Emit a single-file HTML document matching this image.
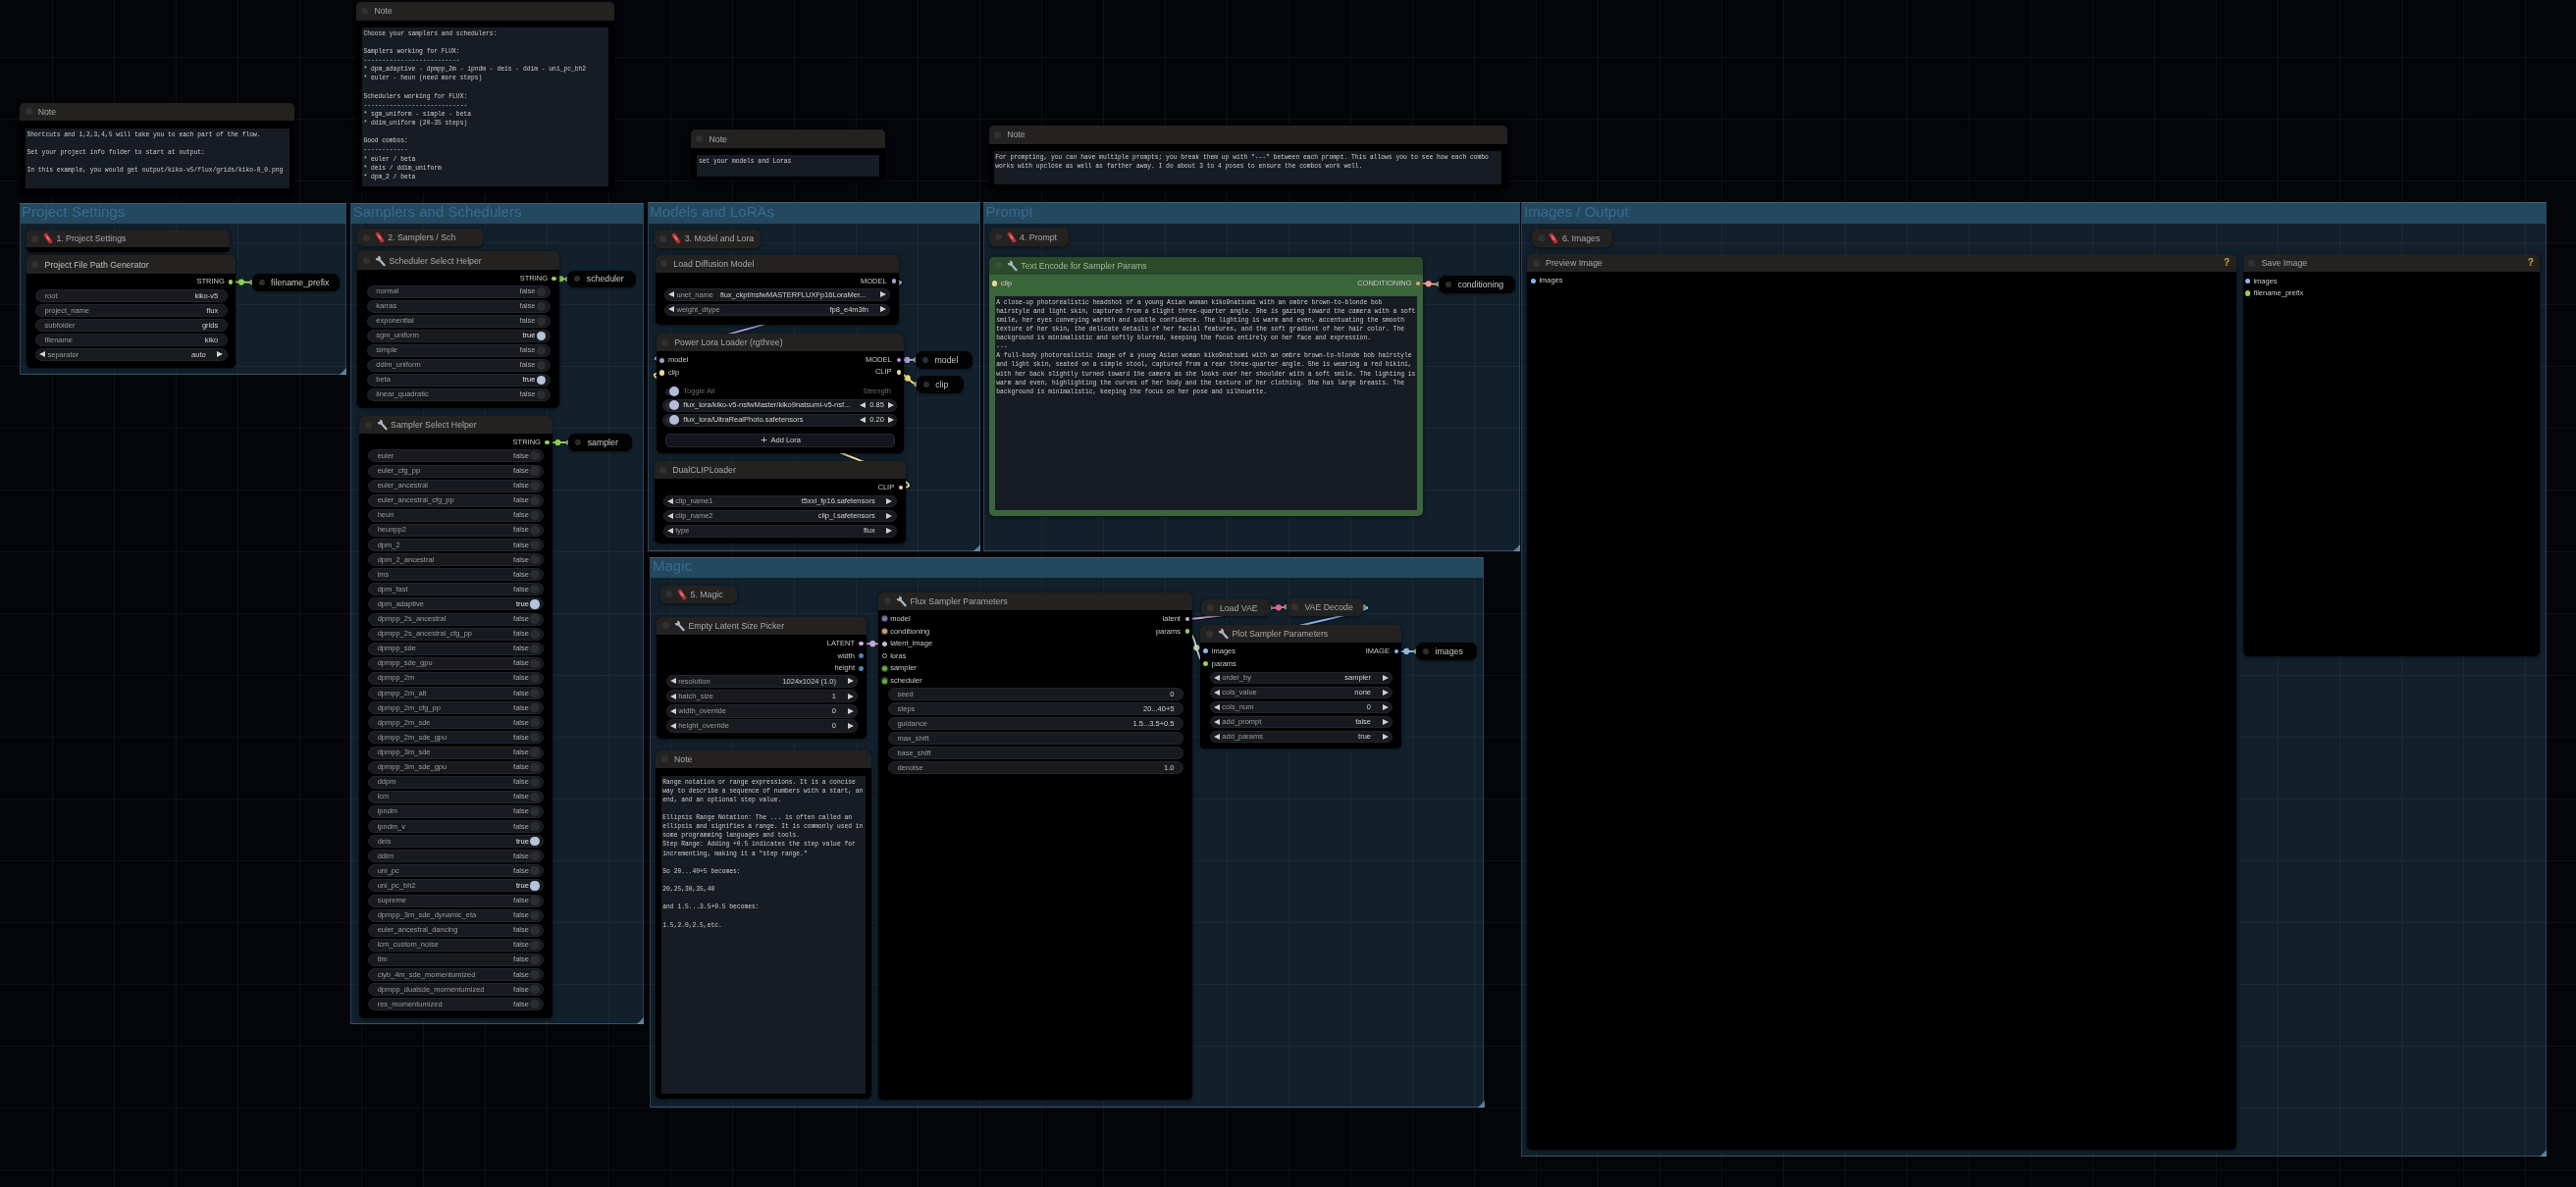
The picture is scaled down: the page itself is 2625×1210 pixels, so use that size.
<!DOCTYPE html>
<html><head><meta charset="utf-8"><style>
html,body{margin:0;padding:0;}
body{width:2625px;height:1210px;overflow:hidden;position:relative;background-color:#040509;
background-image:linear-gradient(90deg, rgba(255,255,255,0.045) 1px, transparent 1px),linear-gradient(180deg, rgba(255,255,255,0.045) 1px, transparent 1px);
background-size:63px 63px;background-position:53px 58px;font-family:"Liberation Sans", sans-serif;}
div,svg{position:absolute;box-sizing:border-box;}
.t{white-space:pre;}
.c{border-radius:50%;}
.g{background:rgba(63,120,158,0.24);border-left:1px solid rgba(80,130,170,0.35);border-right:1px solid rgba(80,130,170,0.35);border-bottom:1px solid rgba(110,150,185,0.4);}
.gt{background:#24485e;border-top:1px solid rgba(80,120,145,0.6);}
.gc{width:0;height:0;border-left:7px solid transparent;border-bottom:7px solid rgba(120,165,200,0.7);}
.n{box-shadow:0 1px 4px rgba(0,0,0,0.55);}
.rr{background:#030303;border-radius:7px;box-shadow:0 1px 3px rgba(0,0,0,0.5);}
.w{background:#181a1f;border:1px solid #22252b;}
.al{width:0;height:0;border-top:3.3px solid transparent;border-bottom:3.3px solid transparent;border-right:6px solid #d0d0d0;}
.ar{width:0;height:0;border-top:3.3px solid transparent;border-bottom:3.3px solid transparent;border-left:6px solid #d0d0d0;}
.ta{background:#171b23;}
.tat{white-space:pre;font-family:"Liberation Mono", monospace;font-size:6.3px;color:#cdcdcd;}
.ic{overflow:visible;}
</style></head><body><div id="wrap" style="left:0;top:0;width:2625px;height:1210px;will-change:transform;">

<div class="n" style="left:20px;top:104.5px;width:280.4px;height:94px;background:#000000;border-radius:5px;"></div>
<div class="nt" style="left:20px;top:104.5px;width:280.4px;height:18.4px;background:#232221;border-radius:5px 5px 0 0;"></div>
<div class="c" style="left:25.5px;top:110.2px;width:7px;height:7px;background:rgba(140,140,150,0.14);"></div>
<div class="t" style="left:38.7px;top:106.7px;height:14px;line-height:14px;font-size:8.75px;color:#a8a8a8;font-family:'Liberation Sans', sans-serif;">Note</div>
<div class="ta" style="left:26.3px;top:131px;width:268.4px;height:61px;"></div>
<div class="tat" style="left:27.5px;top:132.63px;line-height:9.13px;">Shortcuts and 1,2,3,4,5 will take you to each part of the flow.

Set your project info folder to start at output:

In this example, you would get output/kiko-v5/flux/grids/kiko-0_0.png</div>
<div class="n" style="left:362.7px;top:2.2px;width:263.7px;height:192.8px;background:#000000;border-radius:5px;"></div>
<div class="nt" style="left:362.7px;top:2.2px;width:263.7px;height:18.5px;background:#232221;border-radius:5px 5px 0 0;"></div>
<div class="c" style="left:368.2px;top:7.95px;width:7px;height:7px;background:rgba(140,140,150,0.14);"></div>
<div class="t" style="left:381.4px;top:4.45px;height:14px;line-height:14px;font-size:8.75px;color:#a8a8a8;font-family:'Liberation Sans', sans-serif;">Note</div>
<div class="ta" style="left:369px;top:27.8px;width:250.6px;height:162.6px;"></div>
<div class="tat" style="left:370.4px;top:29.84px;line-height:9.13px;">Choose your samplers and schedulers:

Samplers working for FLUX:
--------------------------
* dpm_adaptive - dpmpp_2m - ipndm - deis - ddim - uni_pc_bh2
* euler - heun (need more steps)

Schedulers working for FLUX:
----------------------------
* sgm_uniform - simple - beta
* ddim_uniform (20-35 steps)

Good combos:
------------
* euler / beta
* deis / ddim_uniform
* dpm_2 / beta</div>
<div class="n" style="left:703.8px;top:132.4px;width:198.7px;height:52.1px;background:#000000;border-radius:5px;"></div>
<div class="nt" style="left:703.8px;top:132.4px;width:198.7px;height:18.5px;background:#232221;border-radius:5px 5px 0 0;"></div>
<div class="c" style="left:709.3px;top:138.15px;width:7px;height:7px;background:rgba(140,140,150,0.14);"></div>
<div class="t" style="left:722.5px;top:134.65px;height:14px;line-height:14px;font-size:8.75px;color:#a8a8a8;font-family:'Liberation Sans', sans-serif;">Note</div>
<div class="ta" style="left:710.4px;top:158.2px;width:185.4px;height:21.6px;"></div>
<div class="tat" style="left:711.9px;top:159.94px;line-height:9.13px;">set your models and Loras</div>
<div class="n" style="left:1007.5px;top:128.1px;width:528.4px;height:64.5px;background:#000000;border-radius:5px;"></div>
<div class="nt" style="left:1007.5px;top:128.1px;width:528.4px;height:18.6px;background:#232221;border-radius:5px 5px 0 0;"></div>
<div class="c" style="left:1013px;top:133.9px;width:7px;height:7px;background:rgba(140,140,150,0.14);"></div>
<div class="t" style="left:1026.2px;top:130.4px;height:14px;line-height:14px;font-size:8.75px;color:#a8a8a8;font-family:'Liberation Sans', sans-serif;">Note</div>
<div class="ta" style="left:1013.2px;top:153.7px;width:516.7px;height:34.2px;"></div>
<div class="tat" style="left:1014.3px;top:155.63px;line-height:9.13px;">For prompting, you can have multiple prompts; you break them up with &quot;---&quot; between each prompt. This allows you to see how each combo
works with upclose as well as farther away. I do about 3 to 4 poses to ensure the combos work well.</div>
<div class="g" style="left:19.5px;top:206.6px;width:333.8px;height:175.8px;"></div>
<div class="gt" style="left:19.5px;top:206.6px;width:333.8px;height:21.4px;"></div>
<div class="t" style="left:22.1px;top:204.1px;height:24px;line-height:24px;font-size:15px;color:#386b92;font-family:'Liberation Sans', sans-serif;">Project Settings</div>
<div class="gc" style="left:346.3px;top:375.4px;"></div>
<div class="g" style="left:357.1px;top:206.6px;width:298.8px;height:837.7px;"></div>
<div class="gt" style="left:357.1px;top:206.6px;width:298.8px;height:21.4px;"></div>
<div class="t" style="left:359.7px;top:204.1px;height:24px;line-height:24px;font-size:15px;color:#386b92;font-family:'Liberation Sans', sans-serif;">Samplers and Schedulers</div>
<div class="gc" style="left:648.9px;top:1037.3px;"></div>
<div class="g" style="left:659.7px;top:206.4px;width:339.1px;height:355.6px;"></div>
<div class="gt" style="left:659.7px;top:206.4px;width:339.1px;height:21.4px;"></div>
<div class="t" style="left:662.3px;top:203.9px;height:24px;line-height:24px;font-size:15px;color:#386b92;font-family:'Liberation Sans', sans-serif;">Models and LoRAs</div>
<div class="gc" style="left:991.8px;top:555px;"></div>
<div class="g" style="left:1001.8px;top:206.4px;width:547.5px;height:355.9px;"></div>
<div class="gt" style="left:1001.8px;top:206.4px;width:547.5px;height:21.4px;"></div>
<div class="t" style="left:1004.4px;top:203.9px;height:24px;line-height:24px;font-size:15px;color:#386b92;font-family:'Liberation Sans', sans-serif;">Prompt</div>
<div class="gc" style="left:1542.3px;top:555.3px;"></div>
<div class="g" style="left:1550.4px;top:206.2px;width:1044.8px;height:972.6px;"></div>
<div class="gt" style="left:1550.4px;top:206.2px;width:1044.8px;height:21.4px;"></div>
<div class="t" style="left:1553px;top:203.7px;height:24px;line-height:24px;font-size:15px;color:#386b92;font-family:'Liberation Sans', sans-serif;">Images / Output</div>
<div class="gc" style="left:2588.2px;top:1171.8px;"></div>
<div class="g" style="left:662.4px;top:567.9px;width:850.1px;height:561.1px;"></div>
<div class="gt" style="left:662.4px;top:567.9px;width:850.1px;height:21.4px;"></div>
<div class="t" style="left:665px;top:565.4px;height:24px;line-height:24px;font-size:15px;color:#386b92;font-family:'Liberation Sans', sans-serif;">Magic</div>
<div class="gc" style="left:1505.5px;top:1122px;"></div>
<svg style="left:0;top:0" width="2625" height="1210" viewBox="0 0 2625 1210">
<path d="M235.2 287.3 C240.55 287.3 251.25 287.8 256.6 287.8" fill="none" stroke="rgba(0,0,0,0.5)" stroke-width="4.4"/>
<path d="M235.2 287.3 C240.55 287.3 251.25 287.8 256.6 287.8" fill="none" stroke="#8fd050" stroke-width="2"/>
<circle cx="245.9" cy="287.55" r="3.1" fill="#8fd050"/>
<circle cx="256.6" cy="287.8" r="2.6" fill="#88a888"/>
<path d="M564.4 284 C567.88 284 574.82 284.5 578.3 284.5" fill="none" stroke="rgba(0,0,0,0.5)" stroke-width="4.4"/>
<path d="M564.4 284 C567.88 284 574.82 284.5 578.3 284.5" fill="none" stroke="#8fd050" stroke-width="2"/>
<circle cx="571.35" cy="284.25" r="3.1" fill="#8fd050"/>
<circle cx="578.3" cy="284.5" r="2.6" fill="#88a888"/>
<path d="M557.6 451 C563 451 573.8 451 579.2 451" fill="none" stroke="rgba(0,0,0,0.5)" stroke-width="4.4"/>
<path d="M557.6 451 C563 451 573.8 451 579.2 451" fill="none" stroke="#8fd050" stroke-width="2"/>
<circle cx="568.4" cy="451" r="3.1" fill="#8fd050"/>
<circle cx="579.2" cy="451" r="2.6" fill="#88a888"/>
<path d="M910.8 286.5 C973.13 286.5 612.57 367.2 674.9 367.2" fill="none" stroke="rgba(0,0,0,0.5)" stroke-width="4.4"/>
<path d="M910.8 286.5 C973.13 286.5 612.57 367.2 674.9 367.2" fill="none" stroke="#a8a0d8" stroke-width="2"/>
<path d="M917.9 497.1 C985.34 497.1 607.46 380 674.9 380" fill="none" stroke="rgba(0,0,0,0.5)" stroke-width="4.4"/>
<path d="M917.9 497.1 C985.34 497.1 607.46 380 674.9 380" fill="none" stroke="#f0e0a0" stroke-width="2"/>
<path d="M915.8 367 C920.1 367 928.7 366.8 933 366.8" fill="none" stroke="rgba(0,0,0,0.5)" stroke-width="4.4"/>
<path d="M915.8 367 C920.1 367 928.7 366.8 933 366.8" fill="none" stroke="#a8a0d8" stroke-width="2"/>
<circle cx="924.4" cy="366.9" r="3.1" fill="#a8a0d8"/>
<circle cx="933" cy="366.8" r="2.6" fill="#88a888"/>
<path d="M915.8 379.4 C921.2 379.4 928.3 391.5 933.7 391.5" fill="none" stroke="rgba(0,0,0,0.5)" stroke-width="4.4"/>
<path d="M915.8 379.4 C921.2 379.4 928.3 391.5 933.7 391.5" fill="none" stroke="#f0d878" stroke-width="2"/>
<circle cx="924.75" cy="385.45" r="3.1" fill="#f0d878"/>
<circle cx="933.7" cy="391.5" r="2.6" fill="#88a888"/>
<path d="M1445.2 288.8 C1450.4 288.8 1460.8 289.7 1466 289.7" fill="none" stroke="rgba(0,0,0,0.5)" stroke-width="4.4"/>
<path d="M1445.2 288.8 C1450.4 288.8 1460.8 289.7 1466 289.7" fill="none" stroke="#f0a090" stroke-width="2"/>
<circle cx="1455.6" cy="289.25" r="3.1" fill="#f0a090"/>
<circle cx="1466" cy="289.7" r="2.6" fill="#88a888"/>
<path d="M877.4 656 C883.35 656 895.25 656.3 901.2 656.3" fill="none" stroke="rgba(0,0,0,0.5)" stroke-width="4.4"/>
<path d="M877.4 656 C883.35 656 895.25 656.3 901.2 656.3" fill="none" stroke="#c8a8d8" stroke-width="2"/>
<circle cx="889.3" cy="656.15" r="3.1" fill="#c8a8d8"/>
<path d="M1209.8 630.9 C1235.21 630.9 1285.29 618.7 1310.7 618.7" fill="none" stroke="rgba(0,0,0,0.5)" stroke-width="4.4"/>
<path d="M1209.8 630.9 C1235.21 630.9 1285.29 618.7 1310.7 618.7" fill="none" stroke="#c0a8d8" stroke-width="2"/>
<path d="M1295.1 619.9 C1299.01 619.9 1306.79 618.7 1310.7 618.7" fill="none" stroke="rgba(0,0,0,0.5)" stroke-width="4.4"/>
<path d="M1295.1 619.9 C1299.01 619.9 1306.79 618.7 1310.7 618.7" fill="none" stroke="#e06488" stroke-width="2"/>
<circle cx="1302.9" cy="619.3" r="3.1" fill="#e06488"/>
<circle cx="1310.7" cy="618.7" r="2.6" fill="#88a888"/>
<path d="M1388.6 618.7 C1430.12 618.7 1187.28 663.9 1228.8 663.9" fill="none" stroke="rgba(0,0,0,0.5)" stroke-width="4.4"/>
<path d="M1388.6 618.7 C1430.12 618.7 1187.28 663.9 1228.8 663.9" fill="none" stroke="#88b8e8" stroke-width="2"/>
<path d="M1209.8 643.7 C1219.34 643.7 1219.26 676.8 1228.8 676.8" fill="none" stroke="rgba(0,0,0,0.5)" stroke-width="4.4"/>
<path d="M1209.8 643.7 C1219.34 643.7 1219.26 676.8 1228.8 676.8" fill="none" stroke="#c8dcc0" stroke-width="2"/>
<circle cx="1219.3" cy="660.25" r="3.1" fill="#c8dcc0"/>
<path d="M1423.2 663.9 C1428.18 663.9 1438.12 664 1443.1 664" fill="none" stroke="rgba(0,0,0,0.5)" stroke-width="4.4"/>
<path d="M1423.2 663.9 C1428.18 663.9 1438.12 664 1443.1 664" fill="none" stroke="#88b8e8" stroke-width="2"/>
<circle cx="1433.15" cy="663.95" r="3.1" fill="#88b8e8"/>
<circle cx="1443.1" cy="664" r="2.6" fill="#88a888"/>
<circle cx="1294.3" cy="619.6" r="2.6" fill="#80a080"/>
<circle cx="1389.5" cy="618.7" r="2.6" fill="#80a080"/>
</svg>
<div class="n" style="left:26.5px;top:234.3px;width:207.9px;height:23.2px;background:#000000;border-radius:5px;"></div>
<div class="nt" style="left:26.5px;top:234.3px;width:207.9px;height:18.2px;background:#232221;border-radius:5px 5px 0 0;"></div>
<div class="c" style="left:32px;top:239.9px;width:7px;height:7px;background:rgba(140,140,150,0.14);"></div>
<svg class="ic" style="left:40.9px;top:235.4px" width="16" height="16" viewBox="-8 -8 16 16"><g transform="rotate(55)"><rect x="-5.8" y="-2" width="11.6" height="4" rx="1.5" fill="#b83034"/><rect x="-3.2" y="-1" width="5.5" height="2" rx="1" fill="#f07878" opacity="0.85"/></g></svg>
<div class="t" style="left:57.4px;top:236.4px;height:14px;line-height:14px;font-size:8.75px;color:#a8a8a8;font-family:'Liberation Sans', sans-serif;">1. Project Settings</div>
<div class="n" style="left:26.9px;top:260.3px;width:213.3px;height:114.8px;background:#000000;border-radius:5px;"></div>
<div class="nt" style="left:26.9px;top:260.3px;width:213.3px;height:18.5px;background:#232221;border-radius:5px 5px 0 0;"></div>
<div class="c" style="left:32.4px;top:266.05px;width:7px;height:7px;background:rgba(140,140,150,0.14);"></div>
<div class="t" style="left:45.6px;top:262.55px;height:14px;line-height:14px;font-size:8.75px;color:#c0c0c0;font-family:'Liberation Sans', sans-serif;">Project File Path Generator</div>
<div class="c" style="left:232.9px;top:285px;width:4.6px;height:4.6px;background:#9ccc58;"></div>
<div class="t" style="right:2396.2px;top:281.3px;height:12px;line-height:12px;font-size:7.5px;color:#c8c8c8;font-family:'Liberation Sans', sans-serif;text-align:right;">STRING</div>
<div class="w" style="left:35.9px;top:295.3px;width:195.8px;height:12.5px;border-radius:6.25px;"></div>
<div class="t" style="left:45.6px;top:295.55px;height:12px;line-height:12px;font-size:7.5px;color:#9a9a9a;font-family:'Liberation Sans', sans-serif;">root</div>
<div class="t" style="right:2402.8px;top:295.55px;height:12px;line-height:12px;font-size:7.5px;color:#d0d0d0;font-family:'Liberation Sans', sans-serif;text-align:right;">kiko-v5</div>
<div class="w" style="left:35.9px;top:310.3px;width:195.8px;height:12.5px;border-radius:6.25px;"></div>
<div class="t" style="left:45.6px;top:310.55px;height:12px;line-height:12px;font-size:7.5px;color:#9a9a9a;font-family:'Liberation Sans', sans-serif;">project_name</div>
<div class="t" style="right:2402.8px;top:310.55px;height:12px;line-height:12px;font-size:7.5px;color:#d0d0d0;font-family:'Liberation Sans', sans-serif;text-align:right;">flux</div>
<div class="w" style="left:35.9px;top:325.3px;width:195.8px;height:12.5px;border-radius:6.25px;"></div>
<div class="t" style="left:45.6px;top:325.55px;height:12px;line-height:12px;font-size:7.5px;color:#9a9a9a;font-family:'Liberation Sans', sans-serif;">subfolder</div>
<div class="t" style="right:2402.8px;top:325.55px;height:12px;line-height:12px;font-size:7.5px;color:#d0d0d0;font-family:'Liberation Sans', sans-serif;text-align:right;">grids</div>
<div class="w" style="left:35.9px;top:340.3px;width:195.8px;height:12.5px;border-radius:6.25px;"></div>
<div class="t" style="left:45.6px;top:340.55px;height:12px;line-height:12px;font-size:7.5px;color:#9a9a9a;font-family:'Liberation Sans', sans-serif;">filename</div>
<div class="t" style="right:2402.8px;top:340.55px;height:12px;line-height:12px;font-size:7.5px;color:#d0d0d0;font-family:'Liberation Sans', sans-serif;text-align:right;">kiko</div>
<div class="w" style="left:35.9px;top:355.3px;width:195.8px;height:12.8px;border-radius:6.4px;"></div>
<div class="al" style="left:40.2px;top:358.4px"></div>
<div class="ar" style="left:221.4px;top:358.4px"></div>
<div class="t" style="left:48.5px;top:355.7px;height:12px;line-height:12px;font-size:7.5px;color:#9a9a9a;font-family:'Liberation Sans', sans-serif;">separator</div>
<div class="t" style="right:2415.3px;top:355.7px;height:12px;line-height:12px;font-size:7.5px;color:#d0d0d0;font-family:'Liberation Sans', sans-serif;text-align:right;">auto</div>
<div class="rr" style="left:256.6px;top:278.8px;width:89.7px;height:18.4px;"></div>
<div class="c" style="left:263.6px;top:285px;width:6px;height:6px;background:#2c2e33;"></div>
<div class="t" style="left:276.1px;top:281px;height:14px;line-height:14px;font-size:8.75px;color:#c8c8c8;font-family:'Liberation Sans', sans-serif;">filename_prefix</div>
<div class="n cl" style="left:364.3px;top:233.1px;width:128.9px;height:18.1px;background:#232221;border-radius:6px;"></div>
<div class="c" style="left:369.8px;top:238.65px;width:7px;height:7px;background:rgba(140,140,150,0.14);"></div>
<svg class="ic" style="left:378.7px;top:234.15px" width="16" height="16" viewBox="-8 -8 16 16"><g transform="rotate(55)"><rect x="-5.8" y="-2" width="11.6" height="4" rx="1.5" fill="#b83034"/><rect x="-3.2" y="-1" width="5.5" height="2" rx="1" fill="#f07878" opacity="0.85"/></g></svg>
<div class="t" style="left:395.2px;top:235.15px;height:14px;line-height:14px;font-size:8.75px;color:#a8a8a8;font-family:'Liberation Sans', sans-serif;">2. Samplers / Sch</div>
<div class="n" style="left:364.3px;top:256.2px;width:205.6px;height:160.1px;background:#000000;border-radius:5px;"></div>
<div class="nt" style="left:364.3px;top:256.2px;width:205.6px;height:18.6px;background:#232221;border-radius:5px 5px 0 0;"></div>
<div class="c" style="left:369.8px;top:262px;width:7px;height:7px;background:rgba(140,140,150,0.14);"></div>
<svg class="ic" style="left:380.2px;top:257.5px" width="16" height="16" viewBox="-8 -8 16 16"><line x1="-2" y1="-2" x2="3.6" y2="4.2" stroke="#a9bac8" stroke-width="2.2" stroke-linecap="round"/><circle cx="-2.6" cy="-2.8" r="2.5" fill="#a9bac8"/><circle cx="-3.9" cy="-4.1" r="1.3" fill="#232221"/></svg>
<div class="t" style="left:396.4px;top:258.5px;height:14px;line-height:14px;font-size:8.75px;color:#a8a8a8;font-family:'Liberation Sans', sans-serif;">Scheduler Select Helper</div>
<div class="c" style="left:562.1px;top:281.7px;width:4.6px;height:4.6px;background:#9ccc58;"></div>
<div class="t" style="right:2066.9px;top:278px;height:12px;line-height:12px;font-size:7.5px;color:#c8c8c8;font-family:'Liberation Sans', sans-serif;text-align:right;">STRING</div>
<div class="w" style="left:373.6px;top:290.8px;width:187.1px;height:13px;border-radius:6.5px;"></div>
<div class="t" style="left:383.3px;top:291.3px;height:12px;line-height:12px;font-size:7.5px;color:#9a9a9a;font-family:'Liberation Sans', sans-serif;">normal</div>
<div class="c" style="left:546.9px;top:292.7px;width:9.2px;height:9.2px;background:#2a2c30;"></div>
<div class="t" style="right:2079.6px;top:291.3px;height:12px;line-height:12px;font-size:7.5px;color:#a8a8a8;font-family:'Liberation Sans', sans-serif;text-align:right;">false</div>
<div class="w" style="left:373.6px;top:305.8px;width:187.1px;height:13px;border-radius:6.5px;"></div>
<div class="t" style="left:383.3px;top:306.3px;height:12px;line-height:12px;font-size:7.5px;color:#9a9a9a;font-family:'Liberation Sans', sans-serif;">karras</div>
<div class="c" style="left:546.9px;top:307.7px;width:9.2px;height:9.2px;background:#2a2c30;"></div>
<div class="t" style="right:2079.6px;top:306.3px;height:12px;line-height:12px;font-size:7.5px;color:#a8a8a8;font-family:'Liberation Sans', sans-serif;text-align:right;">false</div>
<div class="w" style="left:373.6px;top:320.8px;width:187.1px;height:13px;border-radius:6.5px;"></div>
<div class="t" style="left:383.3px;top:321.3px;height:12px;line-height:12px;font-size:7.5px;color:#9a9a9a;font-family:'Liberation Sans', sans-serif;">exponential</div>
<div class="c" style="left:546.9px;top:322.7px;width:9.2px;height:9.2px;background:#2a2c30;"></div>
<div class="t" style="right:2079.6px;top:321.3px;height:12px;line-height:12px;font-size:7.5px;color:#a8a8a8;font-family:'Liberation Sans', sans-serif;text-align:right;">false</div>
<div class="w" style="left:373.6px;top:335.8px;width:187.1px;height:13px;border-radius:6.5px;"></div>
<div class="t" style="left:383.3px;top:336.3px;height:12px;line-height:12px;font-size:7.5px;color:#9a9a9a;font-family:'Liberation Sans', sans-serif;">sgm_uniform</div>
<div class="c" style="left:546.9px;top:337.7px;width:9.2px;height:9.2px;background:#b4c4da;"></div>
<div class="t" style="right:2079.6px;top:336.3px;height:12px;line-height:12px;font-size:7.5px;color:#e0e0e0;font-family:'Liberation Sans', sans-serif;text-align:right;">true</div>
<div class="w" style="left:373.6px;top:350.8px;width:187.1px;height:13px;border-radius:6.5px;"></div>
<div class="t" style="left:383.3px;top:351.3px;height:12px;line-height:12px;font-size:7.5px;color:#9a9a9a;font-family:'Liberation Sans', sans-serif;">simple</div>
<div class="c" style="left:546.9px;top:352.7px;width:9.2px;height:9.2px;background:#2a2c30;"></div>
<div class="t" style="right:2079.6px;top:351.3px;height:12px;line-height:12px;font-size:7.5px;color:#a8a8a8;font-family:'Liberation Sans', sans-serif;text-align:right;">false</div>
<div class="w" style="left:373.6px;top:365.8px;width:187.1px;height:13px;border-radius:6.5px;"></div>
<div class="t" style="left:383.3px;top:366.3px;height:12px;line-height:12px;font-size:7.5px;color:#9a9a9a;font-family:'Liberation Sans', sans-serif;">ddim_uniform</div>
<div class="c" style="left:546.9px;top:367.7px;width:9.2px;height:9.2px;background:#2a2c30;"></div>
<div class="t" style="right:2079.6px;top:366.3px;height:12px;line-height:12px;font-size:7.5px;color:#a8a8a8;font-family:'Liberation Sans', sans-serif;text-align:right;">false</div>
<div class="w" style="left:373.6px;top:380.8px;width:187.1px;height:13px;border-radius:6.5px;"></div>
<div class="t" style="left:383.3px;top:381.3px;height:12px;line-height:12px;font-size:7.5px;color:#9a9a9a;font-family:'Liberation Sans', sans-serif;">beta</div>
<div class="c" style="left:546.9px;top:382.7px;width:9.2px;height:9.2px;background:#b4c4da;"></div>
<div class="t" style="right:2079.6px;top:381.3px;height:12px;line-height:12px;font-size:7.5px;color:#e0e0e0;font-family:'Liberation Sans', sans-serif;text-align:right;">true</div>
<div class="w" style="left:373.6px;top:395.8px;width:187.1px;height:13px;border-radius:6.5px;"></div>
<div class="t" style="left:383.3px;top:396.3px;height:12px;line-height:12px;font-size:7.5px;color:#9a9a9a;font-family:'Liberation Sans', sans-serif;">linear_quadratic</div>
<div class="c" style="left:546.9px;top:397.7px;width:9.2px;height:9.2px;background:#2a2c30;"></div>
<div class="t" style="right:2079.6px;top:396.3px;height:12px;line-height:12px;font-size:7.5px;color:#a8a8a8;font-family:'Liberation Sans', sans-serif;text-align:right;">false</div>
<div class="rr" style="left:578.3px;top:275.6px;width:70px;height:17.7px;"></div>
<div class="c" style="left:585.3px;top:281.45px;width:6px;height:6px;background:#2c2e33;"></div>
<div class="t" style="left:597.8px;top:277.45px;height:14px;line-height:14px;font-size:8.75px;color:#c8c8c8;font-family:'Liberation Sans', sans-serif;">scheduler</div>
<div class="n" style="left:366px;top:424.3px;width:197.2px;height:613.3px;background:#000000;border-radius:5px;"></div>
<div class="nt" style="left:366px;top:424.3px;width:197.2px;height:18.1px;background:#232221;border-radius:5px 5px 0 0;"></div>
<div class="c" style="left:371.5px;top:429.85px;width:7px;height:7px;background:rgba(140,140,150,0.14);"></div>
<svg class="ic" style="left:381.9px;top:425.35px" width="16" height="16" viewBox="-8 -8 16 16"><line x1="-2" y1="-2" x2="3.6" y2="4.2" stroke="#a9bac8" stroke-width="2.2" stroke-linecap="round"/><circle cx="-2.6" cy="-2.8" r="2.5" fill="#a9bac8"/><circle cx="-3.9" cy="-4.1" r="1.3" fill="#232221"/></svg>
<div class="t" style="left:398.1px;top:426.35px;height:14px;line-height:14px;font-size:8.75px;color:#a8a8a8;font-family:'Liberation Sans', sans-serif;">Sampler Select Helper</div>
<div class="c" style="left:555.3px;top:448.7px;width:4.6px;height:4.6px;background:#9ccc58;"></div>
<div class="t" style="right:2074.1px;top:445px;height:12px;line-height:12px;font-size:7.5px;color:#c8c8c8;font-family:'Liberation Sans', sans-serif;text-align:right;">STRING</div>
<div class="w" style="left:375px;top:458.4px;width:179.2px;height:13px;border-radius:6.5px;"></div>
<div class="t" style="left:384.7px;top:458.9px;height:12px;line-height:12px;font-size:7.5px;color:#9a9a9a;font-family:'Liberation Sans', sans-serif;">euler</div>
<div class="c" style="left:540.4px;top:460.3px;width:9.2px;height:9.2px;background:#2a2c30;"></div>
<div class="t" style="right:2086.1px;top:458.9px;height:12px;line-height:12px;font-size:7.5px;color:#a8a8a8;font-family:'Liberation Sans', sans-serif;text-align:right;">false</div>
<div class="w" style="left:375px;top:473.5px;width:179.2px;height:13px;border-radius:6.5px;"></div>
<div class="t" style="left:384.7px;top:474px;height:12px;line-height:12px;font-size:7.5px;color:#9a9a9a;font-family:'Liberation Sans', sans-serif;">euler_cfg_pp</div>
<div class="c" style="left:540.4px;top:475.4px;width:9.2px;height:9.2px;background:#2a2c30;"></div>
<div class="t" style="right:2086.1px;top:474px;height:12px;line-height:12px;font-size:7.5px;color:#a8a8a8;font-family:'Liberation Sans', sans-serif;text-align:right;">false</div>
<div class="w" style="left:375px;top:488.61px;width:179.2px;height:13px;border-radius:6.5px;"></div>
<div class="t" style="left:384.7px;top:489.11px;height:12px;line-height:12px;font-size:7.5px;color:#9a9a9a;font-family:'Liberation Sans', sans-serif;">euler_ancestral</div>
<div class="c" style="left:540.4px;top:490.51px;width:9.2px;height:9.2px;background:#2a2c30;"></div>
<div class="t" style="right:2086.1px;top:489.11px;height:12px;line-height:12px;font-size:7.5px;color:#a8a8a8;font-family:'Liberation Sans', sans-serif;text-align:right;">false</div>
<div class="w" style="left:375px;top:503.71px;width:179.2px;height:13px;border-radius:6.5px;"></div>
<div class="t" style="left:384.7px;top:504.21px;height:12px;line-height:12px;font-size:7.5px;color:#9a9a9a;font-family:'Liberation Sans', sans-serif;">euler_ancestral_cfg_pp</div>
<div class="c" style="left:540.4px;top:505.61px;width:9.2px;height:9.2px;background:#2a2c30;"></div>
<div class="t" style="right:2086.1px;top:504.21px;height:12px;line-height:12px;font-size:7.5px;color:#a8a8a8;font-family:'Liberation Sans', sans-serif;text-align:right;">false</div>
<div class="w" style="left:375px;top:518.82px;width:179.2px;height:13px;border-radius:6.5px;"></div>
<div class="t" style="left:384.7px;top:519.32px;height:12px;line-height:12px;font-size:7.5px;color:#9a9a9a;font-family:'Liberation Sans', sans-serif;">heun</div>
<div class="c" style="left:540.4px;top:520.72px;width:9.2px;height:9.2px;background:#2a2c30;"></div>
<div class="t" style="right:2086.1px;top:519.32px;height:12px;line-height:12px;font-size:7.5px;color:#a8a8a8;font-family:'Liberation Sans', sans-serif;text-align:right;">false</div>
<div class="w" style="left:375px;top:533.92px;width:179.2px;height:13px;border-radius:6.5px;"></div>
<div class="t" style="left:384.7px;top:534.42px;height:12px;line-height:12px;font-size:7.5px;color:#9a9a9a;font-family:'Liberation Sans', sans-serif;">heunpp2</div>
<div class="c" style="left:540.4px;top:535.82px;width:9.2px;height:9.2px;background:#2a2c30;"></div>
<div class="t" style="right:2086.1px;top:534.42px;height:12px;line-height:12px;font-size:7.5px;color:#a8a8a8;font-family:'Liberation Sans', sans-serif;text-align:right;">false</div>
<div class="w" style="left:375px;top:549.03px;width:179.2px;height:13px;border-radius:6.5px;"></div>
<div class="t" style="left:384.7px;top:549.53px;height:12px;line-height:12px;font-size:7.5px;color:#9a9a9a;font-family:'Liberation Sans', sans-serif;">dpm_2</div>
<div class="c" style="left:540.4px;top:550.93px;width:9.2px;height:9.2px;background:#2a2c30;"></div>
<div class="t" style="right:2086.1px;top:549.53px;height:12px;line-height:12px;font-size:7.5px;color:#a8a8a8;font-family:'Liberation Sans', sans-serif;text-align:right;">false</div>
<div class="w" style="left:375px;top:564.13px;width:179.2px;height:13px;border-radius:6.5px;"></div>
<div class="t" style="left:384.7px;top:564.63px;height:12px;line-height:12px;font-size:7.5px;color:#9a9a9a;font-family:'Liberation Sans', sans-serif;">dpm_2_ancestral</div>
<div class="c" style="left:540.4px;top:566.03px;width:9.2px;height:9.2px;background:#2a2c30;"></div>
<div class="t" style="right:2086.1px;top:564.63px;height:12px;line-height:12px;font-size:7.5px;color:#a8a8a8;font-family:'Liberation Sans', sans-serif;text-align:right;">false</div>
<div class="w" style="left:375px;top:579.24px;width:179.2px;height:13px;border-radius:6.5px;"></div>
<div class="t" style="left:384.7px;top:579.74px;height:12px;line-height:12px;font-size:7.5px;color:#9a9a9a;font-family:'Liberation Sans', sans-serif;">lms</div>
<div class="c" style="left:540.4px;top:581.14px;width:9.2px;height:9.2px;background:#2a2c30;"></div>
<div class="t" style="right:2086.1px;top:579.74px;height:12px;line-height:12px;font-size:7.5px;color:#a8a8a8;font-family:'Liberation Sans', sans-serif;text-align:right;">false</div>
<div class="w" style="left:375px;top:594.35px;width:179.2px;height:13px;border-radius:6.5px;"></div>
<div class="t" style="left:384.7px;top:594.85px;height:12px;line-height:12px;font-size:7.5px;color:#9a9a9a;font-family:'Liberation Sans', sans-serif;">dpm_fast</div>
<div class="c" style="left:540.4px;top:596.25px;width:9.2px;height:9.2px;background:#2a2c30;"></div>
<div class="t" style="right:2086.1px;top:594.85px;height:12px;line-height:12px;font-size:7.5px;color:#a8a8a8;font-family:'Liberation Sans', sans-serif;text-align:right;">false</div>
<div class="w" style="left:375px;top:609.45px;width:179.2px;height:13px;border-radius:6.5px;"></div>
<div class="t" style="left:384.7px;top:609.95px;height:12px;line-height:12px;font-size:7.5px;color:#9a9a9a;font-family:'Liberation Sans', sans-serif;">dpm_adaptive</div>
<div class="c" style="left:540.4px;top:611.35px;width:9.2px;height:9.2px;background:#b4c4da;"></div>
<div class="t" style="right:2086.1px;top:609.95px;height:12px;line-height:12px;font-size:7.5px;color:#e0e0e0;font-family:'Liberation Sans', sans-serif;text-align:right;">true</div>
<div class="w" style="left:375px;top:624.55px;width:179.2px;height:13px;border-radius:6.5px;"></div>
<div class="t" style="left:384.7px;top:625.05px;height:12px;line-height:12px;font-size:7.5px;color:#9a9a9a;font-family:'Liberation Sans', sans-serif;">dpmpp_2s_ancestral</div>
<div class="c" style="left:540.4px;top:626.45px;width:9.2px;height:9.2px;background:#2a2c30;"></div>
<div class="t" style="right:2086.1px;top:625.05px;height:12px;line-height:12px;font-size:7.5px;color:#a8a8a8;font-family:'Liberation Sans', sans-serif;text-align:right;">false</div>
<div class="w" style="left:375px;top:639.66px;width:179.2px;height:13px;border-radius:6.5px;"></div>
<div class="t" style="left:384.7px;top:640.16px;height:12px;line-height:12px;font-size:7.5px;color:#9a9a9a;font-family:'Liberation Sans', sans-serif;">dpmpp_2s_ancestral_cfg_pp</div>
<div class="c" style="left:540.4px;top:641.56px;width:9.2px;height:9.2px;background:#2a2c30;"></div>
<div class="t" style="right:2086.1px;top:640.16px;height:12px;line-height:12px;font-size:7.5px;color:#a8a8a8;font-family:'Liberation Sans', sans-serif;text-align:right;">false</div>
<div class="w" style="left:375px;top:654.76px;width:179.2px;height:13px;border-radius:6.5px;"></div>
<div class="t" style="left:384.7px;top:655.26px;height:12px;line-height:12px;font-size:7.5px;color:#9a9a9a;font-family:'Liberation Sans', sans-serif;">dpmpp_sde</div>
<div class="c" style="left:540.4px;top:656.66px;width:9.2px;height:9.2px;background:#2a2c30;"></div>
<div class="t" style="right:2086.1px;top:655.26px;height:12px;line-height:12px;font-size:7.5px;color:#a8a8a8;font-family:'Liberation Sans', sans-serif;text-align:right;">false</div>
<div class="w" style="left:375px;top:669.87px;width:179.2px;height:13px;border-radius:6.5px;"></div>
<div class="t" style="left:384.7px;top:670.37px;height:12px;line-height:12px;font-size:7.5px;color:#9a9a9a;font-family:'Liberation Sans', sans-serif;">dpmpp_sde_gpu</div>
<div class="c" style="left:540.4px;top:671.77px;width:9.2px;height:9.2px;background:#2a2c30;"></div>
<div class="t" style="right:2086.1px;top:670.37px;height:12px;line-height:12px;font-size:7.5px;color:#a8a8a8;font-family:'Liberation Sans', sans-serif;text-align:right;">false</div>
<div class="w" style="left:375px;top:684.98px;width:179.2px;height:13px;border-radius:6.5px;"></div>
<div class="t" style="left:384.7px;top:685.48px;height:12px;line-height:12px;font-size:7.5px;color:#9a9a9a;font-family:'Liberation Sans', sans-serif;">dpmpp_2m</div>
<div class="c" style="left:540.4px;top:686.88px;width:9.2px;height:9.2px;background:#2a2c30;"></div>
<div class="t" style="right:2086.1px;top:685.48px;height:12px;line-height:12px;font-size:7.5px;color:#a8a8a8;font-family:'Liberation Sans', sans-serif;text-align:right;">false</div>
<div class="w" style="left:375px;top:700.08px;width:179.2px;height:13px;border-radius:6.5px;"></div>
<div class="t" style="left:384.7px;top:700.58px;height:12px;line-height:12px;font-size:7.5px;color:#9a9a9a;font-family:'Liberation Sans', sans-serif;">dpmpp_2m_alt</div>
<div class="c" style="left:540.4px;top:701.98px;width:9.2px;height:9.2px;background:#2a2c30;"></div>
<div class="t" style="right:2086.1px;top:700.58px;height:12px;line-height:12px;font-size:7.5px;color:#a8a8a8;font-family:'Liberation Sans', sans-serif;text-align:right;">false</div>
<div class="w" style="left:375px;top:715.18px;width:179.2px;height:13px;border-radius:6.5px;"></div>
<div class="t" style="left:384.7px;top:715.68px;height:12px;line-height:12px;font-size:7.5px;color:#9a9a9a;font-family:'Liberation Sans', sans-serif;">dpmpp_2m_cfg_pp</div>
<div class="c" style="left:540.4px;top:717.08px;width:9.2px;height:9.2px;background:#2a2c30;"></div>
<div class="t" style="right:2086.1px;top:715.68px;height:12px;line-height:12px;font-size:7.5px;color:#a8a8a8;font-family:'Liberation Sans', sans-serif;text-align:right;">false</div>
<div class="w" style="left:375px;top:730.29px;width:179.2px;height:13px;border-radius:6.5px;"></div>
<div class="t" style="left:384.7px;top:730.79px;height:12px;line-height:12px;font-size:7.5px;color:#9a9a9a;font-family:'Liberation Sans', sans-serif;">dpmpp_2m_sde</div>
<div class="c" style="left:540.4px;top:732.19px;width:9.2px;height:9.2px;background:#2a2c30;"></div>
<div class="t" style="right:2086.1px;top:730.79px;height:12px;line-height:12px;font-size:7.5px;color:#a8a8a8;font-family:'Liberation Sans', sans-serif;text-align:right;">false</div>
<div class="w" style="left:375px;top:745.39px;width:179.2px;height:13px;border-radius:6.5px;"></div>
<div class="t" style="left:384.7px;top:745.89px;height:12px;line-height:12px;font-size:7.5px;color:#9a9a9a;font-family:'Liberation Sans', sans-serif;">dpmpp_2m_sde_gpu</div>
<div class="c" style="left:540.4px;top:747.29px;width:9.2px;height:9.2px;background:#2a2c30;"></div>
<div class="t" style="right:2086.1px;top:745.89px;height:12px;line-height:12px;font-size:7.5px;color:#a8a8a8;font-family:'Liberation Sans', sans-serif;text-align:right;">false</div>
<div class="w" style="left:375px;top:760.5px;width:179.2px;height:13px;border-radius:6.5px;"></div>
<div class="t" style="left:384.7px;top:761px;height:12px;line-height:12px;font-size:7.5px;color:#9a9a9a;font-family:'Liberation Sans', sans-serif;">dpmpp_3m_sde</div>
<div class="c" style="left:540.4px;top:762.4px;width:9.2px;height:9.2px;background:#2a2c30;"></div>
<div class="t" style="right:2086.1px;top:761px;height:12px;line-height:12px;font-size:7.5px;color:#a8a8a8;font-family:'Liberation Sans', sans-serif;text-align:right;">false</div>
<div class="w" style="left:375px;top:775.61px;width:179.2px;height:13px;border-radius:6.5px;"></div>
<div class="t" style="left:384.7px;top:776.11px;height:12px;line-height:12px;font-size:7.5px;color:#9a9a9a;font-family:'Liberation Sans', sans-serif;">dpmpp_3m_sde_gpu</div>
<div class="c" style="left:540.4px;top:777.5px;width:9.2px;height:9.2px;background:#2a2c30;"></div>
<div class="t" style="right:2086.1px;top:776.11px;height:12px;line-height:12px;font-size:7.5px;color:#a8a8a8;font-family:'Liberation Sans', sans-serif;text-align:right;">false</div>
<div class="w" style="left:375px;top:790.71px;width:179.2px;height:13px;border-radius:6.5px;"></div>
<div class="t" style="left:384.7px;top:791.21px;height:12px;line-height:12px;font-size:7.5px;color:#9a9a9a;font-family:'Liberation Sans', sans-serif;">ddpm</div>
<div class="c" style="left:540.4px;top:792.61px;width:9.2px;height:9.2px;background:#2a2c30;"></div>
<div class="t" style="right:2086.1px;top:791.21px;height:12px;line-height:12px;font-size:7.5px;color:#a8a8a8;font-family:'Liberation Sans', sans-serif;text-align:right;">false</div>
<div class="w" style="left:375px;top:805.82px;width:179.2px;height:13px;border-radius:6.5px;"></div>
<div class="t" style="left:384.7px;top:806.32px;height:12px;line-height:12px;font-size:7.5px;color:#9a9a9a;font-family:'Liberation Sans', sans-serif;">lcm</div>
<div class="c" style="left:540.4px;top:807.72px;width:9.2px;height:9.2px;background:#2a2c30;"></div>
<div class="t" style="right:2086.1px;top:806.32px;height:12px;line-height:12px;font-size:7.5px;color:#a8a8a8;font-family:'Liberation Sans', sans-serif;text-align:right;">false</div>
<div class="w" style="left:375px;top:820.92px;width:179.2px;height:13px;border-radius:6.5px;"></div>
<div class="t" style="left:384.7px;top:821.42px;height:12px;line-height:12px;font-size:7.5px;color:#9a9a9a;font-family:'Liberation Sans', sans-serif;">ipndm</div>
<div class="c" style="left:540.4px;top:822.82px;width:9.2px;height:9.2px;background:#2a2c30;"></div>
<div class="t" style="right:2086.1px;top:821.42px;height:12px;line-height:12px;font-size:7.5px;color:#a8a8a8;font-family:'Liberation Sans', sans-serif;text-align:right;">false</div>
<div class="w" style="left:375px;top:836.02px;width:179.2px;height:13px;border-radius:6.5px;"></div>
<div class="t" style="left:384.7px;top:836.52px;height:12px;line-height:12px;font-size:7.5px;color:#9a9a9a;font-family:'Liberation Sans', sans-serif;">ipndm_v</div>
<div class="c" style="left:540.4px;top:837.92px;width:9.2px;height:9.2px;background:#2a2c30;"></div>
<div class="t" style="right:2086.1px;top:836.52px;height:12px;line-height:12px;font-size:7.5px;color:#a8a8a8;font-family:'Liberation Sans', sans-serif;text-align:right;">false</div>
<div class="w" style="left:375px;top:851.13px;width:179.2px;height:13px;border-radius:6.5px;"></div>
<div class="t" style="left:384.7px;top:851.63px;height:12px;line-height:12px;font-size:7.5px;color:#9a9a9a;font-family:'Liberation Sans', sans-serif;">deis</div>
<div class="c" style="left:540.4px;top:853.03px;width:9.2px;height:9.2px;background:#b4c4da;"></div>
<div class="t" style="right:2086.1px;top:851.63px;height:12px;line-height:12px;font-size:7.5px;color:#e0e0e0;font-family:'Liberation Sans', sans-serif;text-align:right;">true</div>
<div class="w" style="left:375px;top:866.24px;width:179.2px;height:13px;border-radius:6.5px;"></div>
<div class="t" style="left:384.7px;top:866.74px;height:12px;line-height:12px;font-size:7.5px;color:#9a9a9a;font-family:'Liberation Sans', sans-serif;">ddim</div>
<div class="c" style="left:540.4px;top:868.13px;width:9.2px;height:9.2px;background:#2a2c30;"></div>
<div class="t" style="right:2086.1px;top:866.74px;height:12px;line-height:12px;font-size:7.5px;color:#a8a8a8;font-family:'Liberation Sans', sans-serif;text-align:right;">false</div>
<div class="w" style="left:375px;top:881.34px;width:179.2px;height:13px;border-radius:6.5px;"></div>
<div class="t" style="left:384.7px;top:881.84px;height:12px;line-height:12px;font-size:7.5px;color:#9a9a9a;font-family:'Liberation Sans', sans-serif;">uni_pc</div>
<div class="c" style="left:540.4px;top:883.24px;width:9.2px;height:9.2px;background:#2a2c30;"></div>
<div class="t" style="right:2086.1px;top:881.84px;height:12px;line-height:12px;font-size:7.5px;color:#a8a8a8;font-family:'Liberation Sans', sans-serif;text-align:right;">false</div>
<div class="w" style="left:375px;top:896.44px;width:179.2px;height:13px;border-radius:6.5px;"></div>
<div class="t" style="left:384.7px;top:896.94px;height:12px;line-height:12px;font-size:7.5px;color:#9a9a9a;font-family:'Liberation Sans', sans-serif;">uni_pc_bh2</div>
<div class="c" style="left:540.4px;top:898.34px;width:9.2px;height:9.2px;background:#b4c4da;"></div>
<div class="t" style="right:2086.1px;top:896.94px;height:12px;line-height:12px;font-size:7.5px;color:#e0e0e0;font-family:'Liberation Sans', sans-serif;text-align:right;">true</div>
<div class="w" style="left:375px;top:911.55px;width:179.2px;height:13px;border-radius:6.5px;"></div>
<div class="t" style="left:384.7px;top:912.05px;height:12px;line-height:12px;font-size:7.5px;color:#9a9a9a;font-family:'Liberation Sans', sans-serif;">supreme</div>
<div class="c" style="left:540.4px;top:913.45px;width:9.2px;height:9.2px;background:#2a2c30;"></div>
<div class="t" style="right:2086.1px;top:912.05px;height:12px;line-height:12px;font-size:7.5px;color:#a8a8a8;font-family:'Liberation Sans', sans-serif;text-align:right;">false</div>
<div class="w" style="left:375px;top:926.65px;width:179.2px;height:13px;border-radius:6.5px;"></div>
<div class="t" style="left:384.7px;top:927.15px;height:12px;line-height:12px;font-size:7.5px;color:#9a9a9a;font-family:'Liberation Sans', sans-serif;">dpmpp_3m_sde_dynamic_eta</div>
<div class="c" style="left:540.4px;top:928.55px;width:9.2px;height:9.2px;background:#2a2c30;"></div>
<div class="t" style="right:2086.1px;top:927.15px;height:12px;line-height:12px;font-size:7.5px;color:#a8a8a8;font-family:'Liberation Sans', sans-serif;text-align:right;">false</div>
<div class="w" style="left:375px;top:941.76px;width:179.2px;height:13px;border-radius:6.5px;"></div>
<div class="t" style="left:384.7px;top:942.26px;height:12px;line-height:12px;font-size:7.5px;color:#9a9a9a;font-family:'Liberation Sans', sans-serif;">euler_ancestral_dancing</div>
<div class="c" style="left:540.4px;top:943.66px;width:9.2px;height:9.2px;background:#2a2c30;"></div>
<div class="t" style="right:2086.1px;top:942.26px;height:12px;line-height:12px;font-size:7.5px;color:#a8a8a8;font-family:'Liberation Sans', sans-serif;text-align:right;">false</div>
<div class="w" style="left:375px;top:956.87px;width:179.2px;height:13px;border-radius:6.5px;"></div>
<div class="t" style="left:384.7px;top:957.37px;height:12px;line-height:12px;font-size:7.5px;color:#9a9a9a;font-family:'Liberation Sans', sans-serif;">lcm_custom_noise</div>
<div class="c" style="left:540.4px;top:958.76px;width:9.2px;height:9.2px;background:#2a2c30;"></div>
<div class="t" style="right:2086.1px;top:957.37px;height:12px;line-height:12px;font-size:7.5px;color:#a8a8a8;font-family:'Liberation Sans', sans-serif;text-align:right;">false</div>
<div class="w" style="left:375px;top:971.97px;width:179.2px;height:13px;border-radius:6.5px;"></div>
<div class="t" style="left:384.7px;top:972.47px;height:12px;line-height:12px;font-size:7.5px;color:#9a9a9a;font-family:'Liberation Sans', sans-serif;">tlm</div>
<div class="c" style="left:540.4px;top:973.87px;width:9.2px;height:9.2px;background:#2a2c30;"></div>
<div class="t" style="right:2086.1px;top:972.47px;height:12px;line-height:12px;font-size:7.5px;color:#a8a8a8;font-family:'Liberation Sans', sans-serif;text-align:right;">false</div>
<div class="w" style="left:375px;top:987.08px;width:179.2px;height:13px;border-radius:6.5px;"></div>
<div class="t" style="left:384.7px;top:987.58px;height:12px;line-height:12px;font-size:7.5px;color:#9a9a9a;font-family:'Liberation Sans', sans-serif;">clyb_4m_sde_momentumized</div>
<div class="c" style="left:540.4px;top:988.98px;width:9.2px;height:9.2px;background:#2a2c30;"></div>
<div class="t" style="right:2086.1px;top:987.58px;height:12px;line-height:12px;font-size:7.5px;color:#a8a8a8;font-family:'Liberation Sans', sans-serif;text-align:right;">false</div>
<div class="w" style="left:375px;top:1002.18px;width:179.2px;height:13px;border-radius:6.5px;"></div>
<div class="t" style="left:384.7px;top:1002.68px;height:12px;line-height:12px;font-size:7.5px;color:#9a9a9a;font-family:'Liberation Sans', sans-serif;">dpmpp_dualsde_momentumized</div>
<div class="c" style="left:540.4px;top:1004.08px;width:9.2px;height:9.2px;background:#2a2c30;"></div>
<div class="t" style="right:2086.1px;top:1002.68px;height:12px;line-height:12px;font-size:7.5px;color:#a8a8a8;font-family:'Liberation Sans', sans-serif;text-align:right;">false</div>
<div class="w" style="left:375px;top:1017.28px;width:179.2px;height:13px;border-radius:6.5px;"></div>
<div class="t" style="left:384.7px;top:1017.78px;height:12px;line-height:12px;font-size:7.5px;color:#9a9a9a;font-family:'Liberation Sans', sans-serif;">res_momentumized</div>
<div class="c" style="left:540.4px;top:1019.18px;width:9.2px;height:9.2px;background:#2a2c30;"></div>
<div class="t" style="right:2086.1px;top:1017.78px;height:12px;line-height:12px;font-size:7.5px;color:#a8a8a8;font-family:'Liberation Sans', sans-serif;text-align:right;">false</div>
<div class="rr" style="left:579.2px;top:442px;width:64.8px;height:17.7px;"></div>
<div class="c" style="left:586.2px;top:447.85px;width:6px;height:6px;background:#2c2e33;"></div>
<div class="t" style="left:598.7px;top:443.85px;height:14px;line-height:14px;font-size:8.75px;color:#c8c8c8;font-family:'Liberation Sans', sans-serif;">sampler</div>
<div class="n cl" style="left:666.8px;top:233.7px;width:108.7px;height:19.4px;background:#232221;border-radius:6px;"></div>
<div class="c" style="left:672.3px;top:239.9px;width:7px;height:7px;background:rgba(140,140,150,0.14);"></div>
<svg class="ic" style="left:681.2px;top:235.4px" width="16" height="16" viewBox="-8 -8 16 16"><g transform="rotate(55)"><rect x="-5.8" y="-2" width="11.6" height="4" rx="1.5" fill="#b83034"/><rect x="-3.2" y="-1" width="5.5" height="2" rx="1" fill="#f07878" opacity="0.85"/></g></svg>
<div class="t" style="left:697.7px;top:236.4px;height:14px;line-height:14px;font-size:8.75px;color:#a8a8a8;font-family:'Liberation Sans', sans-serif;">3. Model and Lora</div>
<div class="n" style="left:667.6px;top:259.8px;width:248.6px;height:70.8px;background:#000000;border-radius:5px;"></div>
<div class="nt" style="left:667.6px;top:259.8px;width:248.6px;height:18.1px;background:#232221;border-radius:5px 5px 0 0;"></div>
<div class="c" style="left:673.1px;top:265.35px;width:7px;height:7px;background:rgba(140,140,150,0.14);"></div>
<div class="t" style="left:686.3px;top:261.85px;height:14px;line-height:14px;font-size:8.75px;color:#a8a8a8;font-family:'Liberation Sans', sans-serif;">Load Diffusion Model</div>
<div class="c" style="left:908.5px;top:284.2px;width:4.6px;height:4.6px;background:#a99bd0;"></div>
<div class="t" style="right:1721.4px;top:280.5px;height:12px;line-height:12px;font-size:7.5px;color:#c8c8c8;font-family:'Liberation Sans', sans-serif;text-align:right;">MODEL</div>
<div class="w" style="left:676.9px;top:294.4px;width:230.1px;height:12.4px;border-radius:6.2px;"></div>
<div class="al" style="left:681.2px;top:297.3px"></div>
<div class="ar" style="left:896.7px;top:297.3px"></div>
<div class="t" style="left:689.5px;top:294.6px;height:12px;line-height:12px;font-size:7.5px;color:#9a9a9a;font-family:'Liberation Sans', sans-serif;">unet_name</div>
<div class="t" style="left:733.9px;top:294.6px;height:12px;line-height:12px;font-size:7.5px;color:#d0d0d0;font-family:'Liberation Sans', sans-serif;">flux_ckpt/nsfwMASTERFLUXFp16LoraMer...</div>
<div class="w" style="left:676.9px;top:309.5px;width:230.1px;height:12.4px;border-radius:6.2px;"></div>
<div class="al" style="left:681.2px;top:312.4px"></div>
<div class="ar" style="left:896.7px;top:312.4px"></div>
<div class="t" style="left:689.5px;top:309.7px;height:12px;line-height:12px;font-size:7.5px;color:#9a9a9a;font-family:'Liberation Sans', sans-serif;">weight_dtype</div>
<div class="t" style="right:1740px;top:309.7px;height:12px;line-height:12px;font-size:7.5px;color:#d0d0d0;font-family:'Liberation Sans', sans-serif;text-align:right;">fp8_e4m3fn</div>
<div class="n" style="left:668.5px;top:339.9px;width:252.5px;height:121.8px;background:#000000;border-radius:5px;"></div>
<div class="nt" style="left:668.5px;top:339.9px;width:252.5px;height:18.5px;background:#232221;border-radius:5px 5px 0 0;"></div>
<div class="c" style="left:674px;top:345.65px;width:7px;height:7px;background:rgba(140,140,150,0.14);"></div>
<div class="t" style="left:687.2px;top:342.15px;height:14px;line-height:14px;font-size:8.75px;color:#a8a8a8;font-family:'Liberation Sans', sans-serif;">Power Lora Loader (rgthree)</div>
<div class="c" style="left:672.3px;top:364.6px;width:5.2px;height:5.2px;background:#a99bd0;"></div>
<div class="t" style="left:680.9px;top:361.2px;height:12px;line-height:12px;font-size:7.5px;color:#c8c8c8;font-family:'Liberation Sans', sans-serif;">model</div>
<div class="c" style="left:672.3px;top:377.4px;width:5.2px;height:5.2px;background:#eadc98;"></div>
<div class="t" style="left:680.9px;top:374px;height:12px;line-height:12px;font-size:7.5px;color:#c8c8c8;font-family:'Liberation Sans', sans-serif;">clip</div>
<div class="c" style="left:913.5px;top:364.7px;width:4.6px;height:4.6px;background:#a99bd0;"></div>
<div class="t" style="right:1716.4px;top:361px;height:12px;line-height:12px;font-size:7.5px;color:#c8c8c8;font-family:'Liberation Sans', sans-serif;text-align:right;">MODEL</div>
<div class="c" style="left:913.5px;top:377.1px;width:4.6px;height:4.6px;background:#eadc98;"></div>
<div class="t" style="right:1716.4px;top:373.4px;height:12px;line-height:12px;font-size:7.5px;color:#c8c8c8;font-family:'Liberation Sans', sans-serif;text-align:right;">CLIP</div>
<div style="left:677.5px;top:395.6px;width:14px;height:7.4px;border-radius:4px;background:#1d2026;"></div>
<div class="c" style="left:682px;top:394.4px;width:10px;height:10px;background:#b0bcd8;"></div>
<div class="t" style="left:696.3px;top:393px;height:12px;line-height:12px;font-size:7.5px;color:#6a6a6a;font-family:'Liberation Sans', sans-serif;">Toggle All</div>
<div class="t" style="right:1717.2px;top:393px;height:12px;line-height:12px;font-size:7.5px;color:#6a6a6a;font-family:'Liberation Sans', sans-serif;text-align:right;">Strength</div>
<div class="w" style="left:674.9px;top:407px;width:239.6px;height:12.7px;border-radius:6.35px;"></div>
<div style="left:677.5px;top:409.65px;width:14px;height:7.4px;border-radius:4px;background:#262a33;"></div>
<div class="c" style="left:682px;top:408.35px;width:10px;height:10px;background:#b0bcd8;"></div>
<div class="t" style="left:696.3px;top:407.35px;height:12px;line-height:12px;font-size:7.5px;color:#d0d0d0;font-family:'Liberation Sans', sans-serif;">flux_lora/kiko-v5-nsfwMaster/kiko9natsumi-v5-nsf...</div>
<div class="al" style="left:876px;top:410.05px"></div>
<div class="ar" style="left:905px;top:410.05px"></div>
<div class="t" style="left:693.6px;top:407.35px;width:400px;height:12px;line-height:12px;font-size:7.5px;color:#d0d0d0;font-family:'Liberation Sans', sans-serif;text-align:center;">0.85</div>
<div class="w" style="left:674.9px;top:422.1px;width:239.6px;height:12.7px;border-radius:6.35px;"></div>
<div style="left:677.5px;top:424.75px;width:14px;height:7.4px;border-radius:4px;background:#262a33;"></div>
<div class="c" style="left:682px;top:423.45px;width:10px;height:10px;background:#b0bcd8;"></div>
<div class="t" style="left:696.3px;top:422.45px;height:12px;line-height:12px;font-size:7.5px;color:#d0d0d0;font-family:'Liberation Sans', sans-serif;">flux_lora/UltraRealPhoto.safetensors</div>
<div class="al" style="left:876px;top:425.15px"></div>
<div class="ar" style="left:905px;top:425.15px"></div>
<div class="t" style="left:693.6px;top:422.45px;width:400px;height:12px;line-height:12px;font-size:7.5px;color:#d0d0d0;font-family:'Liberation Sans', sans-serif;text-align:center;">0.20</div>
<div class="w" style="left:677.8px;top:442px;width:234.7px;height:13.8px;border-radius:4px;background:#13171d;"></div>
<div class="t" style="left:600.7px;top:443px;width:400px;height:12px;line-height:12px;font-size:7.5px;color:#d0d0d0;font-family:'Liberation Sans', sans-serif;text-align:center;">Add Lora</div>
<div class="t" style="left:578.4px;top:439.6px;width:400px;height:17.6px;line-height:17.6px;font-size:11px;color:#c0c0c0;font-family:'Liberation Sans', sans-serif;text-align:center;">+</div>
<div class="rr" style="left:933px;top:357.9px;width:58px;height:17.8px;"></div>
<div class="c" style="left:940px;top:363.8px;width:6px;height:6px;background:#2c2e33;"></div>
<div class="t" style="left:952.5px;top:359.8px;height:14px;line-height:14px;font-size:8.75px;color:#c8c8c8;font-family:'Liberation Sans', sans-serif;">model</div>
<div class="rr" style="left:933.7px;top:382.5px;width:48.8px;height:18.1px;"></div>
<div class="c" style="left:940.7px;top:388.55px;width:6px;height:6px;background:#2c2e33;"></div>
<div class="t" style="left:953.2px;top:384.55px;height:14px;line-height:14px;font-size:8.75px;color:#c8c8c8;font-family:'Liberation Sans', sans-serif;">clip</div>
<div class="n" style="left:666.5px;top:470.2px;width:256.5px;height:84.2px;background:#000000;border-radius:5px;"></div>
<div class="nt" style="left:666.5px;top:470.2px;width:256.5px;height:17.7px;background:#232221;border-radius:5px 5px 0 0;"></div>
<div class="c" style="left:672px;top:475.55px;width:7px;height:7px;background:rgba(140,140,150,0.14);"></div>
<div class="t" style="left:685.2px;top:472.05px;height:14px;line-height:14px;font-size:8.75px;color:#a8a8a8;font-family:'Liberation Sans', sans-serif;">DualCLIPLoader</div>
<div class="c" style="left:915.6px;top:494.8px;width:4.6px;height:4.6px;background:#eadc98;"></div>
<div class="t" style="right:1713.8px;top:491.1px;height:12px;line-height:12px;font-size:7.5px;color:#c8c8c8;font-family:'Liberation Sans', sans-serif;text-align:right;">CLIP</div>
<div class="w" style="left:675.6px;top:504.7px;width:238.1px;height:12.6px;border-radius:6.3px;"></div>
<div class="al" style="left:679.9px;top:507.7px"></div>
<div class="ar" style="left:903.4px;top:507.7px"></div>
<div class="t" style="left:688.2px;top:505px;height:12px;line-height:12px;font-size:7.5px;color:#9a9a9a;font-family:'Liberation Sans', sans-serif;">clip_name1</div>
<div class="t" style="right:1733.3px;top:505px;height:12px;line-height:12px;font-size:7.5px;color:#d0d0d0;font-family:'Liberation Sans', sans-serif;text-align:right;">t5xxl_fp16.safetensors</div>
<div class="w" style="left:675.6px;top:519.9px;width:238.1px;height:12.6px;border-radius:6.3px;"></div>
<div class="al" style="left:679.9px;top:522.9px"></div>
<div class="ar" style="left:903.4px;top:522.9px"></div>
<div class="t" style="left:688.2px;top:520.2px;height:12px;line-height:12px;font-size:7.5px;color:#9a9a9a;font-family:'Liberation Sans', sans-serif;">clip_name2</div>
<div class="t" style="right:1733.3px;top:520.2px;height:12px;line-height:12px;font-size:7.5px;color:#d0d0d0;font-family:'Liberation Sans', sans-serif;text-align:right;">clip_l.safetensors</div>
<div class="w" style="left:675.6px;top:535px;width:238.1px;height:12.6px;border-radius:6.3px;"></div>
<div class="al" style="left:679.9px;top:538px"></div>
<div class="ar" style="left:903.4px;top:538px"></div>
<div class="t" style="left:688.2px;top:535.3px;height:12px;line-height:12px;font-size:7.5px;color:#9a9a9a;font-family:'Liberation Sans', sans-serif;">type</div>
<div class="t" style="right:1733.3px;top:535.3px;height:12px;line-height:12px;font-size:7.5px;color:#d0d0d0;font-family:'Liberation Sans', sans-serif;text-align:right;">flux</div>
<div class="n cl" style="left:1008.2px;top:232px;width:80.7px;height:19.2px;background:#232221;border-radius:6px;"></div>
<div class="c" style="left:1013.7px;top:238.1px;width:7px;height:7px;background:rgba(140,140,150,0.14);"></div>
<svg class="ic" style="left:1022.6px;top:233.6px" width="16" height="16" viewBox="-8 -8 16 16"><g transform="rotate(55)"><rect x="-5.8" y="-2" width="11.6" height="4" rx="1.5" fill="#b83034"/><rect x="-3.2" y="-1" width="5.5" height="2" rx="1" fill="#f07878" opacity="0.85"/></g></svg>
<div class="t" style="left:1039.1px;top:234.6px;height:14px;line-height:14px;font-size:8.75px;color:#a8a8a8;font-family:'Liberation Sans', sans-serif;">4. Prompt</div>
<div class="n" style="left:1008.2px;top:261.9px;width:442.3px;height:264.1px;background:#3b653a;border-radius:5px;"></div>
<div class="nt" style="left:1008.2px;top:261.9px;width:442.3px;height:18.1px;background:#2a4a2a;border-radius:5px 5px 0 0;"></div>
<div class="c" style="left:1013.7px;top:267.45px;width:7px;height:7px;background:rgba(140,140,150,0.14);"></div>
<svg class="ic" style="left:1024.1px;top:262.95px" width="16" height="16" viewBox="-8 -8 16 16"><line x1="-2" y1="-2" x2="3.6" y2="4.2" stroke="#a9bac8" stroke-width="2.2" stroke-linecap="round"/><circle cx="-2.6" cy="-2.8" r="2.5" fill="#a9bac8"/><circle cx="-3.9" cy="-4.1" r="1.3" fill="#2a4a2a"/></svg>
<div class="t" style="left:1040.3px;top:263.95px;height:14px;line-height:14px;font-size:8.75px;color:#a0b8a0;font-family:'Liberation Sans', sans-serif;">Text Encode for Sampler Params</div>
<div class="c" style="left:1011.2px;top:286.4px;width:5.2px;height:5.2px;background:#eadc98;"></div>
<div class="t" style="left:1019.8px;top:283px;height:12px;line-height:12px;font-size:7.5px;color:#c8c8c8;font-family:'Liberation Sans', sans-serif;">clip</div>
<div class="c" style="left:1442.9px;top:286.5px;width:4.6px;height:4.6px;background:#e8a070;"></div>
<div class="t" style="right:1186.4px;top:282.8px;height:12px;line-height:12px;font-size:7.5px;color:#c8c8c8;font-family:'Liberation Sans', sans-serif;text-align:right;">CONDITIONING</div>
<div class="ta" style="left:1013.8px;top:302px;width:430.4px;height:217.6px;"></div>
<div class="tat" style="left:1015.3px;top:303.53px;line-height:9.13px;">A close-up photorealistic headshot of a young Asian woman kiko9natsumi with an ombre brown-to-blonde bob
hairstyle and light skin, captured from a slight three-quarter angle. She is gazing toward the camera with a soft
smile, her eyes conveying warmth and subtle confidence. The lighting is warm and even, accentuating the smooth
texture of her skin, the delicate details of her facial features, and the soft gradient of her hair color. The
background is minimalistic and softly blurred, keeping the focus entirely on her face and expression.
---
A full-body photorealistic image of a young Asian woman kiko9natsumi with an ombre brown-to-blonde bob hairstyle
and light skin, seated on a simple stool, captured from a rear three-quarter angle. She is wearing a red bikini,
with her back slightly turned toward the camera as she looks over her shoulder with a soft smile. The lighting is
warm and even, highlighting the curves of her body and the texture of her clothing. She has large breasts. The
background is minimalistic, keeping the focus on her pose and silhouette.</div>
<div class="rr" style="left:1466px;top:280.5px;width:77.8px;height:18.5px;"></div>
<div class="c" style="left:1473px;top:286.75px;width:6px;height:6px;background:#2c2e33;"></div>
<div class="t" style="left:1485.5px;top:282.75px;height:14px;line-height:14px;font-size:8.75px;color:#c8c8c8;font-family:'Liberation Sans', sans-serif;">conditioning</div>
<div class="n cl" style="left:1561px;top:232.6px;width:81.5px;height:19.9px;background:#232221;border-radius:6px;"></div>
<div class="c" style="left:1566.5px;top:239.05px;width:7px;height:7px;background:rgba(140,140,150,0.14);"></div>
<svg class="ic" style="left:1575.4px;top:234.55px" width="16" height="16" viewBox="-8 -8 16 16"><g transform="rotate(55)"><rect x="-5.8" y="-2" width="11.6" height="4" rx="1.5" fill="#b83034"/><rect x="-3.2" y="-1" width="5.5" height="2" rx="1" fill="#f07878" opacity="0.85"/></g></svg>
<div class="t" style="left:1591.9px;top:235.55px;height:14px;line-height:14px;font-size:8.75px;color:#a8a8a8;font-family:'Liberation Sans', sans-serif;">6. Images</div>
<div class="n" style="left:1556.4px;top:258.7px;width:722.8px;height:913.3px;background:#000000;border-radius:5px;"></div>
<div class="nt" style="left:1556.4px;top:258.7px;width:722.8px;height:18.6px;background:#232221;border-radius:5px 5px 0 0;"></div>
<div class="c" style="left:1561.9px;top:264.5px;width:7px;height:7px;background:rgba(140,140,150,0.14);"></div>
<div class="t" style="left:1575.1px;top:261px;height:14px;line-height:14px;font-size:8.75px;color:#a8a8a8;font-family:'Liberation Sans', sans-serif;">Preview Image</div>
<div class="t" style="left:2069px;top:260px;width:400px;height:16px;line-height:16px;font-size:10px;color:#d9a030;font-family:'Liberation Sans', sans-serif;text-align:center;font-weight:bold;">?</div>
<div class="c" style="left:1559.8px;top:283.6px;width:5.2px;height:5.2px;background:#88b8e8;"></div>
<div class="t" style="left:1568.4px;top:280.2px;height:12px;line-height:12px;font-size:7.5px;color:#c8c8c8;font-family:'Liberation Sans', sans-serif;">images</div>
<div class="n" style="left:2285.8px;top:259.3px;width:302.4px;height:410.2px;background:#000000;border-radius:5px;"></div>
<div class="nt" style="left:2285.8px;top:259.3px;width:302.4px;height:17.4px;background:#232221;border-radius:5px 5px 0 0;"></div>
<div class="c" style="left:2291.3px;top:264.5px;width:7px;height:7px;background:rgba(140,140,150,0.14);"></div>
<div class="t" style="left:2304.5px;top:261px;height:14px;line-height:14px;font-size:8.75px;color:#a8a8a8;font-family:'Liberation Sans', sans-serif;">Save Image</div>
<div class="t" style="left:2378.7px;top:260px;width:400px;height:16px;line-height:16px;font-size:10px;color:#d9a030;font-family:'Liberation Sans', sans-serif;text-align:center;font-weight:bold;">?</div>
<div class="c" style="left:2287.8px;top:284px;width:5.2px;height:5.2px;background:#88b8e8;"></div>
<div class="t" style="left:2296.4px;top:280.6px;height:12px;line-height:12px;font-size:7.5px;color:#c8c8c8;font-family:'Liberation Sans', sans-serif;">images</div>
<div class="c" style="left:2287.8px;top:296.4px;width:5.2px;height:5.2px;background:#9ccc58;"></div>
<div class="t" style="left:2296.4px;top:293px;height:12px;line-height:12px;font-size:7.5px;color:#c8c8c8;font-family:'Liberation Sans', sans-serif;">filename_prefix</div>
<div class="n cl" style="left:672.7px;top:597px;width:78.3px;height:17.8px;background:#232221;border-radius:6px;"></div>
<div class="c" style="left:678.2px;top:602.4px;width:7px;height:7px;background:rgba(140,140,150,0.14);"></div>
<svg class="ic" style="left:687.1px;top:597.9px" width="16" height="16" viewBox="-8 -8 16 16"><g transform="rotate(55)"><rect x="-5.8" y="-2" width="11.6" height="4" rx="1.5" fill="#b83034"/><rect x="-3.2" y="-1" width="5.5" height="2" rx="1" fill="#f07878" opacity="0.85"/></g></svg>
<div class="t" style="left:703.6px;top:598.9px;height:14px;line-height:14px;font-size:8.75px;color:#a8a8a8;font-family:'Liberation Sans', sans-serif;">5. Magic</div>
<div class="n" style="left:669.3px;top:629px;width:214px;height:123.9px;background:#000000;border-radius:5px;"></div>
<div class="nt" style="left:669.3px;top:629px;width:214px;height:17.8px;background:#232221;border-radius:5px 5px 0 0;"></div>
<div class="c" style="left:674.8px;top:634.4px;width:7px;height:7px;background:rgba(140,140,150,0.14);"></div>
<svg class="ic" style="left:685.2px;top:629.9px" width="16" height="16" viewBox="-8 -8 16 16"><line x1="-2" y1="-2" x2="3.6" y2="4.2" stroke="#a9bac8" stroke-width="2.2" stroke-linecap="round"/><circle cx="-2.6" cy="-2.8" r="2.5" fill="#a9bac8"/><circle cx="-3.9" cy="-4.1" r="1.3" fill="#232221"/></svg>
<div class="t" style="left:701.4px;top:630.9px;height:14px;line-height:14px;font-size:8.75px;color:#a8a8a8;font-family:'Liberation Sans', sans-serif;">Empty Latent Size Picker</div>
<div class="c" style="left:875.1px;top:653.7px;width:4.6px;height:4.6px;background:#d0b0dc;"></div>
<div class="t" style="right:1754px;top:650px;height:12px;line-height:12px;font-size:7.5px;color:#c8c8c8;font-family:'Liberation Sans', sans-serif;text-align:right;">LATENT</div>
<div class="c" style="left:875.1px;top:666.4px;width:4.6px;height:4.6px;background:#4d7fb5;"></div>
<div class="t" style="right:1754px;top:662.7px;height:12px;line-height:12px;font-size:7.5px;color:#c8c8c8;font-family:'Liberation Sans', sans-serif;text-align:right;">width</div>
<div class="c" style="left:875.1px;top:679px;width:4.6px;height:4.6px;background:#4d7fb5;"></div>
<div class="t" style="right:1754px;top:675.3px;height:12px;line-height:12px;font-size:7.5px;color:#c8c8c8;font-family:'Liberation Sans', sans-serif;text-align:right;">height</div>
<div class="w" style="left:678.6px;top:688px;width:195.4px;height:13.3px;border-radius:6.65px;"></div>
<div class="al" style="left:682.9px;top:691.35px"></div>
<div class="ar" style="left:863.7px;top:691.35px"></div>
<div class="t" style="left:691.2px;top:688.65px;height:12px;line-height:12px;font-size:7.5px;color:#9a9a9a;font-family:'Liberation Sans', sans-serif;">resolution</div>
<div class="t" style="right:1773px;top:688.65px;height:12px;line-height:12px;font-size:7.5px;color:#d0d0d0;font-family:'Liberation Sans', sans-serif;text-align:right;">1024x1024 (1.0)</div>
<div class="w" style="left:678.6px;top:703.15px;width:195.4px;height:13.3px;border-radius:6.65px;"></div>
<div class="al" style="left:682.9px;top:706.5px"></div>
<div class="ar" style="left:863.7px;top:706.5px"></div>
<div class="t" style="left:691.2px;top:703.8px;height:12px;line-height:12px;font-size:7.5px;color:#9a9a9a;font-family:'Liberation Sans', sans-serif;">batch_size</div>
<div class="t" style="right:1773px;top:703.8px;height:12px;line-height:12px;font-size:7.5px;color:#d0d0d0;font-family:'Liberation Sans', sans-serif;text-align:right;">1</div>
<div class="w" style="left:678.6px;top:718.3px;width:195.4px;height:13.3px;border-radius:6.65px;"></div>
<div class="al" style="left:682.9px;top:721.65px"></div>
<div class="ar" style="left:863.7px;top:721.65px"></div>
<div class="t" style="left:691.2px;top:718.95px;height:12px;line-height:12px;font-size:7.5px;color:#9a9a9a;font-family:'Liberation Sans', sans-serif;">width_override</div>
<div class="t" style="right:1773px;top:718.95px;height:12px;line-height:12px;font-size:7.5px;color:#d0d0d0;font-family:'Liberation Sans', sans-serif;text-align:right;">0</div>
<div class="w" style="left:678.6px;top:733.45px;width:195.4px;height:13.3px;border-radius:6.65px;"></div>
<div class="al" style="left:682.9px;top:736.8px"></div>
<div class="ar" style="left:863.7px;top:736.8px"></div>
<div class="t" style="left:691.2px;top:734.1px;height:12px;line-height:12px;font-size:7.5px;color:#9a9a9a;font-family:'Liberation Sans', sans-serif;">height_override</div>
<div class="t" style="right:1773px;top:734.1px;height:12px;line-height:12px;font-size:7.5px;color:#d0d0d0;font-family:'Liberation Sans', sans-serif;text-align:right;">0</div>
<div class="n" style="left:668.3px;top:765px;width:219.7px;height:355.2px;background:#000000;border-radius:5px;"></div>
<div class="nt" style="left:668.3px;top:765px;width:219.7px;height:17.7px;background:#232221;border-radius:5px 5px 0 0;"></div>
<div class="c" style="left:673.8px;top:770.35px;width:7px;height:7px;background:rgba(140,140,150,0.14);"></div>
<div class="t" style="left:687px;top:766.85px;height:14px;line-height:14px;font-size:8.75px;color:#a8a8a8;font-family:'Liberation Sans', sans-serif;">Note</div>
<div class="ta" style="left:674px;top:791px;width:207.9px;height:323.7px;"></div>
<div class="tat" style="left:675.3px;top:792.53px;line-height:9.13px;">Range notation or range expressions. It is a concise
way to describe a sequence of numbers with a start, an
end, and an optional step value.

Ellipsis Range Notation: The ... is often called an
ellipsis and signifies a range. It is commonly used in
some programming languages and tools.
Step Range: Adding +0.5 indicates the step value for
incrementing, making it a &quot;step range.&quot;

So 20...40+5 becomes:

20,25,30,35,40

and 1.5...3.5+0.5 becomes:

1.5,2.0,2.5,etc.</div>
<div class="n" style="left:895.3px;top:603.6px;width:320.2px;height:517.9px;background:#000000;border-radius:5px;"></div>
<div class="nt" style="left:895.3px;top:603.6px;width:320.2px;height:18.2px;background:#232221;border-radius:5px 5px 0 0;"></div>
<div class="c" style="left:900.8px;top:609.2px;width:7px;height:7px;background:rgba(140,140,150,0.14);"></div>
<svg class="ic" style="left:911.2px;top:604.7px" width="16" height="16" viewBox="-8 -8 16 16"><line x1="-2" y1="-2" x2="3.6" y2="4.2" stroke="#a9bac8" stroke-width="2.2" stroke-linecap="round"/><circle cx="-2.6" cy="-2.8" r="2.5" fill="#a9bac8"/><circle cx="-3.9" cy="-4.1" r="1.3" fill="#232221"/></svg>
<div class="t" style="left:927.4px;top:605.7px;height:14px;line-height:14px;font-size:8.75px;color:#a8a8a8;font-family:'Liberation Sans', sans-serif;">Flux Sampler Parameters</div>
<div class="c" style="left:897.6px;top:627.3px;width:7.2px;height:7.2px;background:#3a3850;"></div>
<div class="c" style="left:898.7px;top:628.4px;width:5px;height:5px;background:#7c7aa8;"></div>
<div class="t" style="left:907.2px;top:624.9px;height:12px;line-height:12px;font-size:7.5px;color:#c8c8c8;font-family:'Liberation Sans', sans-serif;">model</div>
<div class="c" style="left:897.6px;top:639.92px;width:7.2px;height:7.2px;background:#5a3a28;"></div>
<div class="c" style="left:898.7px;top:641.02px;width:5px;height:5px;background:#c89a7a;"></div>
<div class="t" style="left:907.2px;top:637.52px;height:12px;line-height:12px;font-size:7.5px;color:#c8c8c8;font-family:'Liberation Sans', sans-serif;">conditioning</div>
<div class="c" style="left:898.6px;top:653.54px;width:5.2px;height:5.2px;background:#c8b8d8;"></div>
<div class="t" style="left:907.2px;top:650.14px;height:12px;line-height:12px;font-size:7.5px;color:#c8c8c8;font-family:'Liberation Sans', sans-serif;">latent_image</div>
<div class="c" style="left:898.6px;top:666.16px;width:5.2px;height:5.2px;background:transparent;border:1.3px solid #aaa;box-sizing:border-box;"></div>
<div class="t" style="left:907.2px;top:662.76px;height:12px;line-height:12px;font-size:7.5px;color:#c8c8c8;font-family:'Liberation Sans', sans-serif;">loras</div>
<div class="c" style="left:897.6px;top:677.78px;width:7.2px;height:7.2px;background:#2a4a18;"></div>
<div class="c" style="left:898.7px;top:678.88px;width:5px;height:5px;background:#6aa83a;"></div>
<div class="t" style="left:907.2px;top:675.38px;height:12px;line-height:12px;font-size:7.5px;color:#c8c8c8;font-family:'Liberation Sans', sans-serif;">sampler</div>
<div class="c" style="left:897.6px;top:690.4px;width:7.2px;height:7.2px;background:#2a4a18;"></div>
<div class="c" style="left:898.7px;top:691.5px;width:5px;height:5px;background:#6aa83a;"></div>
<div class="t" style="left:907.2px;top:688px;height:12px;line-height:12px;font-size:7.5px;color:#c8c8c8;font-family:'Liberation Sans', sans-serif;">scheduler</div>
<div class="c" style="left:1207.5px;top:628.6px;width:4.6px;height:4.6px;background:#d0b0dc;"></div>
<div class="t" style="right:1422.1px;top:624.9px;height:12px;line-height:12px;font-size:7.5px;color:#c8c8c8;font-family:'Liberation Sans', sans-serif;text-align:right;">latent</div>
<div class="c" style="left:1207.5px;top:641.4px;width:4.6px;height:4.6px;background:#9ccc58;"></div>
<div class="t" style="right:1422.1px;top:637.7px;height:12px;line-height:12px;font-size:7.5px;color:#c8c8c8;font-family:'Liberation Sans', sans-serif;text-align:right;">params</div>
<div class="w" style="left:904.7px;top:701.2px;width:301.3px;height:12.8px;border-radius:6.4px;"></div>
<div class="t" style="left:914.4px;top:701.6px;height:12px;line-height:12px;font-size:7.5px;color:#9a9a9a;font-family:'Liberation Sans', sans-serif;">seed</div>
<div class="t" style="right:1428.5px;top:701.6px;height:12px;line-height:12px;font-size:7.5px;color:#d0d0d0;font-family:'Liberation Sans', sans-serif;text-align:right;">0</div>
<div class="w" style="left:904.7px;top:716.22px;width:301.3px;height:12.8px;border-radius:6.4px;"></div>
<div class="t" style="left:914.4px;top:716.62px;height:12px;line-height:12px;font-size:7.5px;color:#9a9a9a;font-family:'Liberation Sans', sans-serif;">steps</div>
<div class="t" style="right:1428.5px;top:716.62px;height:12px;line-height:12px;font-size:7.5px;color:#d0d0d0;font-family:'Liberation Sans', sans-serif;text-align:right;">20...40+5</div>
<div class="w" style="left:904.7px;top:731.24px;width:301.3px;height:12.8px;border-radius:6.4px;"></div>
<div class="t" style="left:914.4px;top:731.64px;height:12px;line-height:12px;font-size:7.5px;color:#9a9a9a;font-family:'Liberation Sans', sans-serif;">guidance</div>
<div class="t" style="right:1428.5px;top:731.64px;height:12px;line-height:12px;font-size:7.5px;color:#d0d0d0;font-family:'Liberation Sans', sans-serif;text-align:right;">1.5...3.5+0.5</div>
<div class="w" style="left:904.7px;top:746.26px;width:301.3px;height:12.8px;border-radius:6.4px;"></div>
<div class="t" style="left:914.4px;top:746.66px;height:12px;line-height:12px;font-size:7.5px;color:#9a9a9a;font-family:'Liberation Sans', sans-serif;">max_shift</div>
<div class="t" style="right:1428.5px;top:746.66px;height:12px;line-height:12px;font-size:7.5px;color:#d0d0d0;font-family:'Liberation Sans', sans-serif;text-align:right;"></div>
<div class="w" style="left:904.7px;top:761.28px;width:301.3px;height:12.8px;border-radius:6.4px;"></div>
<div class="t" style="left:914.4px;top:761.68px;height:12px;line-height:12px;font-size:7.5px;color:#9a9a9a;font-family:'Liberation Sans', sans-serif;">base_shift</div>
<div class="t" style="right:1428.5px;top:761.68px;height:12px;line-height:12px;font-size:7.5px;color:#d0d0d0;font-family:'Liberation Sans', sans-serif;text-align:right;"></div>
<div class="w" style="left:904.7px;top:776.3px;width:301.3px;height:12.8px;border-radius:6.4px;"></div>
<div class="t" style="left:914.4px;top:776.7px;height:12px;line-height:12px;font-size:7.5px;color:#9a9a9a;font-family:'Liberation Sans', sans-serif;">denoise</div>
<div class="t" style="right:1428.5px;top:776.7px;height:12px;line-height:12px;font-size:7.5px;color:#d0d0d0;font-family:'Liberation Sans', sans-serif;text-align:right;">1.0</div>
<div class="n cl" style="left:1224.2px;top:611.4px;width:70.9px;height:17.1px;background:#232221;border-radius:6px;"></div>
<div class="c" style="left:1229.7px;top:616.45px;width:7px;height:7px;background:rgba(140,140,150,0.14);"></div>
<div class="t" style="left:1242.9px;top:612.95px;height:14px;line-height:14px;font-size:8.75px;color:#a8a8a8;font-family:'Liberation Sans', sans-serif;">Load VAE</div>
<div class="n cl" style="left:1310.7px;top:609.8px;width:77.9px;height:17.9px;background:#232221;border-radius:6px;"></div>
<div class="c" style="left:1316.2px;top:615.25px;width:7px;height:7px;background:rgba(140,140,150,0.14);"></div>
<div class="t" style="left:1329.4px;top:611.75px;height:14px;line-height:14px;font-size:8.75px;color:#a8a8a8;font-family:'Liberation Sans', sans-serif;">VAE Decode</div>
<div class="n" style="left:1223.4px;top:637.1px;width:204.9px;height:126.2px;background:#000000;border-radius:5px;"></div>
<div class="nt" style="left:1223.4px;top:637.1px;width:204.9px;height:17.9px;background:#232221;border-radius:5px 5px 0 0;"></div>
<div class="c" style="left:1228.9px;top:642.55px;width:7px;height:7px;background:rgba(140,140,150,0.14);"></div>
<svg class="ic" style="left:1239.3px;top:638.05px" width="16" height="16" viewBox="-8 -8 16 16"><line x1="-2" y1="-2" x2="3.6" y2="4.2" stroke="#a9bac8" stroke-width="2.2" stroke-linecap="round"/><circle cx="-2.6" cy="-2.8" r="2.5" fill="#a9bac8"/><circle cx="-3.9" cy="-4.1" r="1.3" fill="#232221"/></svg>
<div class="t" style="left:1255.5px;top:639.05px;height:14px;line-height:14px;font-size:8.75px;color:#a8a8a8;font-family:'Liberation Sans', sans-serif;">Plot Sampler Parameters</div>
<div class="c" style="left:1226.2px;top:661.3px;width:5.2px;height:5.2px;background:#88b8e8;"></div>
<div class="t" style="left:1234.8px;top:657.9px;height:12px;line-height:12px;font-size:7.5px;color:#c8c8c8;font-family:'Liberation Sans', sans-serif;">images</div>
<div class="c" style="left:1226.2px;top:674.2px;width:5.2px;height:5.2px;background:#9ccc58;"></div>
<div class="t" style="left:1234.8px;top:670.8px;height:12px;line-height:12px;font-size:7.5px;color:#c8c8c8;font-family:'Liberation Sans', sans-serif;">params</div>
<div class="c" style="left:1420.9px;top:661.6px;width:4.6px;height:4.6px;background:#88b8e8;"></div>
<div class="t" style="right:1209.1px;top:657.9px;height:12px;line-height:12px;font-size:7.5px;color:#c8c8c8;font-family:'Liberation Sans', sans-serif;text-align:right;">IMAGE</div>
<div class="w" style="left:1232.7px;top:684.6px;width:186.3px;height:12.5px;border-radius:6.25px;"></div>
<div class="al" style="left:1237px;top:687.55px"></div>
<div class="ar" style="left:1408.7px;top:687.55px"></div>
<div class="t" style="left:1245.3px;top:684.85px;height:12px;line-height:12px;font-size:7.5px;color:#9a9a9a;font-family:'Liberation Sans', sans-serif;">order_by</div>
<div class="t" style="right:1228px;top:684.85px;height:12px;line-height:12px;font-size:7.5px;color:#d0d0d0;font-family:'Liberation Sans', sans-serif;text-align:right;">sampler</div>
<div class="w" style="left:1232.7px;top:699.6px;width:186.3px;height:12.5px;border-radius:6.25px;"></div>
<div class="al" style="left:1237px;top:702.55px"></div>
<div class="ar" style="left:1408.7px;top:702.55px"></div>
<div class="t" style="left:1245.3px;top:699.85px;height:12px;line-height:12px;font-size:7.5px;color:#9a9a9a;font-family:'Liberation Sans', sans-serif;">cols_value</div>
<div class="t" style="right:1228px;top:699.85px;height:12px;line-height:12px;font-size:7.5px;color:#d0d0d0;font-family:'Liberation Sans', sans-serif;text-align:right;">none</div>
<div class="w" style="left:1232.7px;top:714.6px;width:186.3px;height:12.5px;border-radius:6.25px;"></div>
<div class="al" style="left:1237px;top:717.55px"></div>
<div class="ar" style="left:1408.7px;top:717.55px"></div>
<div class="t" style="left:1245.3px;top:714.85px;height:12px;line-height:12px;font-size:7.5px;color:#9a9a9a;font-family:'Liberation Sans', sans-serif;">cols_num</div>
<div class="t" style="right:1228px;top:714.85px;height:12px;line-height:12px;font-size:7.5px;color:#d0d0d0;font-family:'Liberation Sans', sans-serif;text-align:right;">0</div>
<div class="w" style="left:1232.7px;top:729.6px;width:186.3px;height:12.5px;border-radius:6.25px;"></div>
<div class="al" style="left:1237px;top:732.55px"></div>
<div class="ar" style="left:1408.7px;top:732.55px"></div>
<div class="t" style="left:1245.3px;top:729.85px;height:12px;line-height:12px;font-size:7.5px;color:#9a9a9a;font-family:'Liberation Sans', sans-serif;">add_prompt</div>
<div class="t" style="right:1228px;top:729.85px;height:12px;line-height:12px;font-size:7.5px;color:#d0d0d0;font-family:'Liberation Sans', sans-serif;text-align:right;">false</div>
<div class="w" style="left:1232.7px;top:744.6px;width:186.3px;height:12.5px;border-radius:6.25px;"></div>
<div class="al" style="left:1237px;top:747.55px"></div>
<div class="ar" style="left:1408.7px;top:747.55px"></div>
<div class="t" style="left:1245.3px;top:744.85px;height:12px;line-height:12px;font-size:7.5px;color:#9a9a9a;font-family:'Liberation Sans', sans-serif;">add_params</div>
<div class="t" style="right:1228px;top:744.85px;height:12px;line-height:12px;font-size:7.5px;color:#d0d0d0;font-family:'Liberation Sans', sans-serif;text-align:right;">true</div>
<div class="rr" style="left:1443.1px;top:655px;width:61.6px;height:17.9px;"></div>
<div class="c" style="left:1450.1px;top:660.95px;width:6px;height:6px;background:#2c2e33;"></div>
<div class="t" style="left:1462.6px;top:656.95px;height:14px;line-height:14px;font-size:8.75px;color:#c8c8c8;font-family:'Liberation Sans', sans-serif;">images</div>
</div></body></html>
